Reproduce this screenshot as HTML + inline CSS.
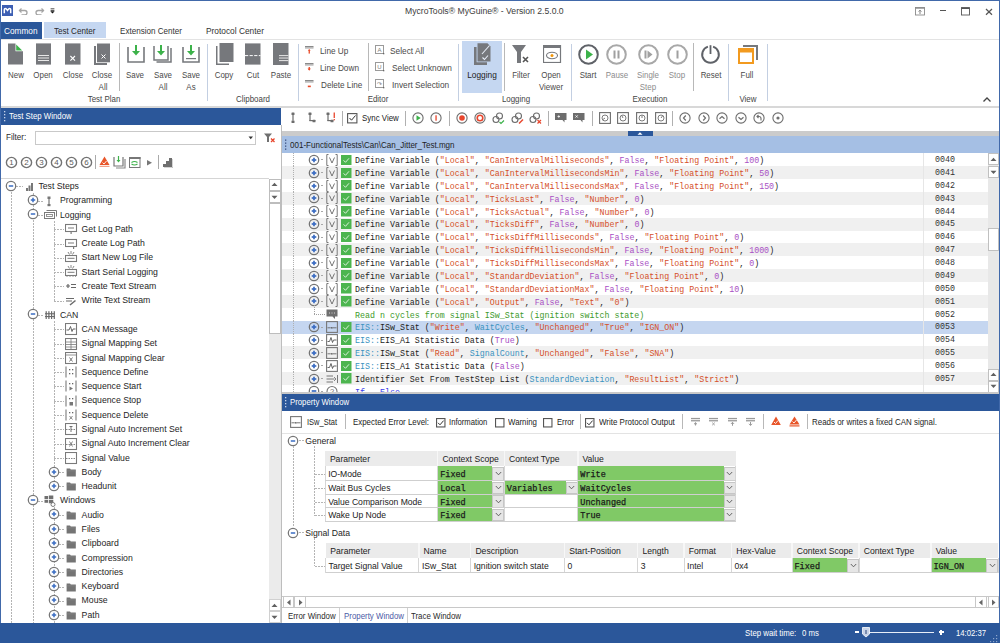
<!DOCTYPE html>
<html><head><meta charset="utf-8"><style>
html,body{margin:0;padding:0;}
body{width:1000px;height:643px;overflow:hidden;position:relative;background:#fff;font-family:"Liberation Sans",sans-serif;}
.a{position:absolute;display:block;}
.t{position:absolute;white-space:nowrap;line-height:1;}
</style></head><body>
<div class="a" style="left:0px;top:0px;width:1000px;height:1px;background:#4169aa;"></div>
<div class="a" style="left:0px;top:0px;width:1px;height:643px;background:#4169aa;"></div>
<div class="a" style="left:999px;top:0px;width:1px;height:643px;background:#4169aa;"></div>
<div class="a" style="left:2.2px;top:5.2px;width:11px;height:10.8px;background:#3d5fb3;"></div>
<svg class="a" style="left:2.2px;top:5.2px;" width="11" height="10.8" viewBox="0 0 11 10.8"><path d="M2.3 8.2V4.6Q2.3 3.4 3.4 3.4Q4.2 3.4 5.5 5.3Q6.8 3.4 7.6 3.4Q8.7 3.4 8.7 4.6V8.2" fill="none" stroke="#fff" stroke-width="1.5"/></svg>
<svg class="a" style="left:18px;top:6px;" width="11" height="9" viewBox="0 0 11 9"><path d="M3.5 2.5L1.5 4.5L3.5 6.5" fill="none" stroke="#a4a4a4" stroke-width="1.3"/><path d="M1.5 4.5H6.8A2.2 2.2 0 0 1 6.8 8.9H3.5" fill="none" stroke="#a4a4a4" stroke-width="1.3"/></svg>
<svg class="a" style="left:34px;top:6px;" width="11" height="9" viewBox="0 0 11 9"><path d="M7.5 2.5L9.5 4.5L7.5 6.5" fill="none" stroke="#a4a4a4" stroke-width="1.3"/><path d="M9.5 4.5H4.2A2.2 2.2 0 0 0 4.2 8.9H7.5" fill="none" stroke="#a4a4a4" stroke-width="1.3"/></svg>
<svg class="a" style="left:50px;top:7.5px;" width="5" height="6" viewBox="0 0 5 6"><rect x="0.6" y="0.4" width="3.8" height="0.9" fill="#333"/><rect x="0.6" y="2" width="3.8" height="0.8" fill="#333"/><path d="M0.3 3.2H4.7L2.5 5.6Z" fill="#111"/></svg>
<div class="t" style="left:405.2px;top:7.64px;font-size:8.28px;color:#3c3c3c;transform:scaleX(1.045);transform-origin:left center;">MycroTools® MyGuine® - Version 2.5.0.0</div>
<svg class="a" style="left:914.5px;top:6.5px;" width="11" height="9" viewBox="0 0 11 9"><rect x="0.5" y="0.5" width="9" height="7.5" fill="none" stroke="#8a8a8a" stroke-width="0.9"/><rect x="0.5" y="0.5" width="9" height="1.2" fill="#8a8a8a"/><path d="M5 7V3.2M3.6 4.6L5 3.2L6.4 4.6" fill="none" stroke="#666" stroke-width="0.8"/></svg>
<div class="a" style="left:940px;top:10px;width:5.5px;height:1.1px;background:#555;"></div>
<svg class="a" style="left:960.5px;top:6.5px;" width="10" height="9" viewBox="0 0 10 9"><rect x="0.5" y="0.6" width="8" height="7.4" fill="none" stroke="#555" stroke-width="0.9"/><rect x="0.5" y="0.6" width="8" height="1.4" fill="#555"/></svg>
<svg class="a" style="left:984.5px;top:7.5px;" width="9" height="8" viewBox="0 0 9 8"><path d="M1 1L7 6.8M7 1L1 6.8" stroke="#555" stroke-width="1.2"/></svg>
<div class="a" style="left:1px;top:22px;width:41px;height:16.5px;background:#2b579a;"></div>
<div class="t" style="left:4.3px;top:25.61px;font-size:9.74px;color:#fff;transform:scaleX(0.848);transform-origin:left center;">Common</div>
<div class="a" style="left:44px;top:22.2px;width:62px;height:16.3px;background:#c5d7f1;"></div>
<div class="t" style="left:54.1px;top:25.61px;font-size:9.74px;color:#2a2a2a;transform:scaleX(0.831);transform-origin:left center;">Test Center</div>
<div class="t" style="left:119.9px;top:25.61px;font-size:9.74px;color:#333;transform:scaleX(0.830);transform-origin:left center;">Extension Center</div>
<div class="t" style="left:205.8px;top:25.61px;font-size:9.74px;color:#333;transform:scaleX(0.857);transform-origin:left center;">Protocol Center</div>
<div class="a" style="left:1px;top:38.5px;width:998px;height:1px;background:#e3e3e3;"></div>
<div class="a" style="left:1px;top:106px;width:998px;height:2px;background:#d8d8d8;"></div>
<div class="a" style="left:119px;top:43px;width:1px;height:48px;background:#b8b8b8;"></div>
<div class="a" style="left:368px;top:43px;width:1px;height:48px;background:#b8b8b8;"></div>
<div class="a" style="left:504px;top:43px;width:1px;height:48px;background:#b8b8b8;"></div>
<div class="a" style="left:693px;top:43px;width:1px;height:48px;background:#b8b8b8;"></div>
<div class="a" style="left:207px;top:44px;width:1px;height:57px;background:#c3cfe2;"></div>
<div class="a" style="left:298px;top:44px;width:1px;height:57px;background:#c3cfe2;"></div>
<div class="a" style="left:458px;top:44px;width:1px;height:57px;background:#c3cfe2;"></div>
<div class="a" style="left:571px;top:44px;width:1px;height:57px;background:#c3cfe2;"></div>
<div class="a" style="left:728px;top:44px;width:1px;height:57px;background:#c3cfe2;"></div>
<div class="a" style="left:767px;top:44px;width:1px;height:57px;background:#c3cfe2;"></div>
<svg class="a" style="left:8px;top:43px;" width="16" height="22" viewBox="0 0 16 22"><path d="M0 0.4H7.5V8.2H15V21.6H0Z" fill="#76787c"/><path d="M8.2 1.6V7.4H14.2Z" fill="#3cb24a"/></svg>
<div class="t" style="left:-284.4px;width:600px;text-align:center;top:70.45px;font-size:9.45px;color:#4a4a4a;transform:scaleX(0.840);transform-origin:center center;">New</div>
<svg class="a" style="left:36px;top:43px;" width="16" height="22" viewBox="0 0 16 22"><rect y="0.4" width="15" height="21.2" fill="#76787c"/><rect x="2" y="12" width="11" height="1" fill="#e8e8e8"/><rect x="2" y="14.5" width="11" height="1" fill="#e8e8e8"/><rect x="2" y="17" width="11" height="1" fill="#e8e8e8"/></svg>
<div class="t" style="left:-257.1px;width:600px;text-align:center;top:70.45px;font-size:9.45px;color:#4a4a4a;transform:scaleX(0.840);transform-origin:center center;">Open</div>
<svg class="a" style="left:65px;top:43px;" width="16" height="22" viewBox="0 0 16 22"><rect y="0.4" width="15.5" height="21.2" fill="#76787c"/><path d="M5.4 13L10 17.6M10 13L5.4 17.6" stroke="#fff" stroke-width="1.1"/></svg>
<div class="t" style="left:-227.2px;width:600px;text-align:center;top:70.45px;font-size:9.45px;color:#4a4a4a;transform:scaleX(0.840);transform-origin:center center;">Close</div>
<svg class="a" style="left:94px;top:43px;" width="17" height="23" viewBox="0 0 17 23"><path d="M0 3H2V20H13V22H0Z" fill="#76787c"/><rect x="3" y="0.5" width="13" height="18.8" fill="#76787c"/><path d="M7.5 11.5L11.5 15.5M11.5 11.5L7.5 15.5" stroke="#fff" stroke-width="1"/></svg>
<div class="t" style="left:-198px;width:600px;text-align:center;top:70.45px;font-size:9.45px;color:#4a4a4a;transform:scaleX(0.840);transform-origin:center center;">Close</div>
<div class="t" style="left:-197px;width:600px;text-align:center;top:81.55px;font-size:9.45px;color:#4a4a4a;transform:scaleX(0.840);transform-origin:center center;">All</div>
<svg class="a" style="left:126.5px;top:45px;" width="20" height="19" viewBox="0 0 20 19"><path d="M1 2V17H17V2" fill="none" stroke="#76787c" stroke-width="1.6"/><path d="M9 0V8" stroke="#3cb24a" stroke-width="2"/><path d="M5 6L9 10.5L13 6Z" fill="#3cb24a"/></svg>
<div class="t" style="left:-164.7px;width:600px;text-align:center;top:70.45px;font-size:9.45px;color:#4a4a4a;transform:scaleX(0.840);transform-origin:center center;">Save</div>
<svg class="a" style="left:153px;top:45px;" width="20" height="19" viewBox="0 0 20 19"><path d="M1 1V15H15V1" fill="none" stroke="#76787c" stroke-width="1.5"/><path d="M3.5 17H18V3" fill="none" stroke="#76787c" stroke-width="1.5"/><path d="M8 0V8" stroke="#3cb24a" stroke-width="2"/><path d="M4 6L8 10.5L12 6Z" fill="#3cb24a"/></svg>
<div class="t" style="left:-137.2px;width:600px;text-align:center;top:70.45px;font-size:9.45px;color:#4a4a4a;transform:scaleX(0.840);transform-origin:center center;">Save</div>
<div class="t" style="left:-137.2px;width:600px;text-align:center;top:81.55px;font-size:9.45px;color:#4a4a4a;transform:scaleX(0.840);transform-origin:center center;">All</div>
<svg class="a" style="left:181.5px;top:45px;" width="20" height="19" viewBox="0 0 20 19"><path d="M1 2V17H17V2" fill="none" stroke="#76787c" stroke-width="1.6"/><rect x="4" y="13" width="10" height="1.2" fill="#76787c"/><path d="M9 0V8" stroke="#3cb24a" stroke-width="2"/><path d="M5 6L9 10.5L13 6Z" fill="#3cb24a"/></svg>
<div class="t" style="left:-109.4px;width:600px;text-align:center;top:70.45px;font-size:9.45px;color:#4a4a4a;transform:scaleX(0.840);transform-origin:center center;">Save</div>
<div class="t" style="left:-109.4px;width:600px;text-align:center;top:81.55px;font-size:9.45px;color:#4a4a4a;transform:scaleX(0.840);transform-origin:center center;">As</div>
<svg class="a" style="left:216px;top:43px;" width="18" height="22" viewBox="0 0 18 22"><rect x="0" y="3" width="13" height="19" fill="#76787c"/><rect x="1.5" y="3" width="11.5" height="17.5" fill="#fff"/><rect x="3.5" y="0" width="14" height="19" fill="#76787c"/></svg>
<div class="t" style="left:-75.6px;width:600px;text-align:center;top:70.45px;font-size:9.45px;color:#4a4a4a;transform:scaleX(0.840);transform-origin:center center;">Copy</div>
<svg class="a" style="left:245px;top:43px;" width="16" height="22" viewBox="0 0 16 22"><rect y="0.4" width="15.5" height="21.2" fill="#76787c"/><path d="M0 12.6H15.5" stroke="#fff" stroke-width="1" stroke-dasharray="3.2 1.4"/></svg>
<div class="t" style="left:-47.19999999999999px;width:600px;text-align:center;top:70.45px;font-size:9.45px;color:#4a4a4a;transform:scaleX(0.840);transform-origin:center center;">Cut</div>
<svg class="a" style="left:273px;top:43px;" width="16" height="22" viewBox="0 0 16 22"><rect width="15.5" height="22" fill="#76787c"/><rect x="6" y="12" width="9.5" height="1.1" fill="#ddd"/><rect x="6" y="14.5" width="9.5" height="1.1" fill="#ddd"/><rect x="6" y="17" width="9.5" height="1.1" fill="#ddd"/></svg>
<div class="t" style="left:-19.30000000000001px;width:600px;text-align:center;top:70.45px;font-size:9.45px;color:#4a4a4a;transform:scaleX(0.840);transform-origin:center center;">Paste</div>
<div class="t" style="left:-196px;width:600px;text-align:center;top:94.05px;font-size:9.45px;color:#444;transform:scaleX(0.840);transform-origin:center center;">Test Plan</div>
<div class="t" style="left:-47px;width:600px;text-align:center;top:94.05px;font-size:9.45px;color:#444;transform:scaleX(0.840);transform-origin:center center;">Clipboard</div>
<svg class="a" style="left:305px;top:46px;" width="10" height="9" viewBox="0 0 10 9"><rect x="0" y="0" width="8.5" height="1.4" fill="#8a8a8a"/><rect x="0" y="1.4" width="8.5" height="1.2" fill="#b0b0b0"/><rect x="3.6" y="3.6" width="1.3" height="4" fill="#e84c2a"/><path d="M2.8 4.8L4.25 3.2L5.7 4.8Z" fill="#e84c2a"/></svg>
<div class="t" style="left:320.2px;top:46.90px;font-size:9.16px;color:#4a4a4a;transform:scaleX(0.897);transform-origin:left center;">Line Up</div>
<svg class="a" style="left:305px;top:63px;" width="10" height="9" viewBox="0 0 10 9"><rect x="0" y="0" width="8.5" height="1.4" fill="#8a8a8a"/><rect x="0" y="1.4" width="8.5" height="1.2" fill="#b0b0b0"/><rect x="3.6" y="4" width="1.3" height="3" fill="#e84c2a"/><path d="M2.6 5.5L4.25 7.8L5.9 5.5Z" fill="#e84c2a"/></svg>
<div class="t" style="left:320.2px;top:64.00px;font-size:9.16px;color:#4a4a4a;transform:scaleX(0.901);transform-origin:left center;">Line Down</div>
<svg class="a" style="left:305px;top:80px;" width="10" height="9" viewBox="0 0 10 9"><rect x="0" y="0" width="8.5" height="1.4" fill="#8a8a8a"/><rect x="0" y="1.4" width="8.5" height="1.2" fill="#b0b0b0"/><rect x="2.8" y="5.6" width="3" height="1.6" fill="#e84c2a"/></svg>
<div class="t" style="left:320.7px;top:81.10px;font-size:9.16px;color:#4a4a4a;transform:scaleX(0.891);transform-origin:left center;">Delete Line</div>
<svg class="a" style="left:375px;top:45px;" width="11" height="11" viewBox="0 0 11 11"><rect x="0.5" y="0.5" width="8" height="8" fill="none" stroke="#9a9a9a"/><text x="4.5" y="6.8" font-size="6" text-anchor="middle" fill="#7a7a7a" font-family="Liberation Sans">A</text><rect x="8" y="8" width="1.3" height="1.3" fill="#666"/></svg>
<div class="t" style="left:390.4px;top:46.90px;font-size:9.16px;color:#4a4a4a;transform:scaleX(0.908);transform-origin:left center;">Select All</div>
<svg class="a" style="left:375px;top:62px;" width="11" height="11" viewBox="0 0 11 11"><rect x="0.5" y="0.5" width="8" height="8" fill="none" stroke="#9a9a9a"/><text x="4.5" y="6.8" font-size="6" text-anchor="middle" fill="#7a7a7a" font-family="Liberation Sans">U</text><rect x="8" y="8" width="1.3" height="1.3" fill="#666"/></svg>
<div class="t" style="left:391.7px;top:64.00px;font-size:9.16px;color:#4a4a4a;transform:scaleX(0.905);transform-origin:left center;">Select Unknown</div>
<svg class="a" style="left:375px;top:79px;" width="11" height="11" viewBox="0 0 11 11"><rect x="0.5" y="0.5" width="8" height="8" fill="none" stroke="#9a9a9a"/><text x="4.5" y="6.8" font-size="6" text-anchor="middle" fill="#7a7a7a" font-family="Liberation Sans">&#8631;</text><rect x="8" y="8" width="1.3" height="1.3" fill="#666"/></svg>
<div class="t" style="left:391.7px;top:81.10px;font-size:9.16px;color:#4a4a4a;transform:scaleX(0.906);transform-origin:left center;">Invert Selection</div>
<div class="t" style="left:78px;width:600px;text-align:center;top:94.05px;font-size:9.45px;color:#444;transform:scaleX(0.840);transform-origin:center center;">Editor</div>
<div class="a" style="left:462px;top:40.5px;width:40px;height:52px;background:#c5d7f1;"></div>
<svg class="a" style="left:474px;top:43px;" width="18" height="23" viewBox="0 0 18 23"><path d="M0 4H2.6V19.3H13V22H0Z" fill="#76787c"/><path d="M3.5 0.2H13.5L16.5 3.5V18.5H3.5Z" fill="#76787c"/><path d="M15.5 2.5L8 11" stroke="#e8eef8" stroke-width="1.1"/><path d="M8.5 14.5L10.5 16.5L14 12.5" fill="none" stroke="#e8eef8" stroke-width="1.1"/></svg>
<div class="t" style="left:182px;width:600px;text-align:center;top:70.45px;font-size:9.45px;color:#222;transform:scaleX(0.880);transform-origin:center center;">Logging</div>
<svg class="a" style="left:512px;top:45px;" width="19" height="19" viewBox="0 0 19 19"><path d="M0 0H14L9 7V18H5V7Z" fill="#76787c"/><path d="M11 12L16 17M16 12L11 17" stroke="#555" stroke-width="1.6"/></svg>
<div class="t" style="left:221.20000000000005px;width:600px;text-align:center;top:70.45px;font-size:9.45px;color:#4a4a4a;transform:scaleX(0.840);transform-origin:center center;">Filter</div>
<svg class="a" style="left:543px;top:45px;" width="19" height="18" viewBox="0 0 19 18"><rect x="0.5" y="0.5" width="17" height="17" fill="none" stroke="#76787c" stroke-width="1.2"/><rect x="0" y="0" width="18" height="3" fill="#76787c"/><ellipse cx="9" cy="10.5" rx="5.5" ry="3.2" fill="none" stroke="#76787c" stroke-width="1.1"/><circle cx="9" cy="10.5" r="1.5" fill="#f0960a"/></svg>
<div class="t" style="left:251.29999999999995px;width:600px;text-align:center;top:70.45px;font-size:9.45px;color:#4a4a4a;transform:scaleX(0.840);transform-origin:center center;">Open</div>
<div class="t" style="left:251.29999999999995px;width:600px;text-align:center;top:81.55px;font-size:9.45px;color:#4a4a4a;transform:scaleX(0.840);transform-origin:center center;">Viewer</div>
<div class="t" style="left:215.5px;width:600px;text-align:center;top:94.05px;font-size:9.45px;color:#444;transform:scaleX(0.840);transform-origin:center center;">Logging</div>
<svg class="a" style="left:577.5px;top:44px;" width="21" height="21" viewBox="0 0 21 21"><circle cx="10.5" cy="10.5" r="9.3" fill="none" stroke="#5f6268" stroke-width="2"/><path d="M8 5.5L15 10.5L8 15.5Z" fill="#3cb24a"/></svg>
<div class="t" style="left:287.79999999999995px;width:600px;text-align:center;top:70.45px;font-size:9.45px;color:#4a4a4a;transform:scaleX(0.840);transform-origin:center center;">Start</div>
<svg class="a" style="left:605.5px;top:44px;" width="21" height="21" viewBox="0 0 21 21"><circle cx="10.5" cy="10.5" r="9.3" fill="none" stroke="#a8a8a8" stroke-width="2"/><rect x="7.5" y="6.5" width="2" height="8" fill="#a0a0a0"/><rect x="11.5" y="6.5" width="2" height="8" fill="#a0a0a0"/></svg>
<div class="t" style="left:316.6px;width:600px;text-align:center;top:70.45px;font-size:9.45px;color:#8c8c8c;transform:scaleX(0.840);transform-origin:center center;">Pause</div>
<svg class="a" style="left:637.5px;top:44px;" width="21" height="21" viewBox="0 0 21 21"><circle cx="10.5" cy="10.5" r="9.3" fill="none" stroke="#a8a8a8" stroke-width="2"/><rect x="6.5" y="6.5" width="2" height="8" fill="#a0a0a0"/><path d="M9.5 6.5L14.5 10.5L9.5 14.5Z" fill="#a0a0a0"/></svg>
<div class="t" style="left:347.70000000000005px;width:600px;text-align:center;top:70.45px;font-size:9.45px;color:#8c8c8c;transform:scaleX(0.840);transform-origin:center center;">Single</div>
<div class="t" style="left:347.70000000000005px;width:600px;text-align:center;top:81.55px;font-size:9.45px;color:#8c8c8c;transform:scaleX(0.840);transform-origin:center center;">Step</div>
<svg class="a" style="left:666.5px;top:44px;" width="21" height="21" viewBox="0 0 21 21"><circle cx="10.5" cy="10.5" r="9.3" fill="none" stroke="#a8a8a8" stroke-width="2"/><rect x="9.5" y="6.5" width="2" height="8" fill="#a0a0a0"/></svg>
<div class="t" style="left:377px;width:600px;text-align:center;top:70.45px;font-size:9.45px;color:#8c8c8c;transform:scaleX(0.840);transform-origin:center center;">Stop</div>
<svg class="a" style="left:699.5px;top:44px;" width="21" height="21" viewBox="0 0 21 21"><path d="M7.9 2.6A8.3 8.3 0 1 0 13.1 2.6" fill="none" stroke="#5f6268" stroke-width="2"/><path d="M10.5 1.2V10" stroke="#5f6268" stroke-width="1.8"/></svg>
<div class="t" style="left:410.70000000000005px;width:600px;text-align:center;top:70.45px;font-size:9.45px;color:#4a4a4a;transform:scaleX(0.840);transform-origin:center center;">Reset</div>
<div class="t" style="left:350.4px;width:600px;text-align:center;top:94.05px;font-size:9.45px;color:#444;transform:scaleX(0.840);transform-origin:center center;">Execution</div>
<svg class="a" style="left:738px;top:45px;" width="21" height="20" viewBox="0 0 21 20"><path d="M5 1H19V15" fill="none" stroke="#76787c" stroke-width="2"/><rect x="1" y="4" width="14" height="14" fill="#fff" stroke="#f29a1f" stroke-width="2"/><rect x="1" y="4" width="14" height="3.5" fill="#f29a1f"/></svg>
<div class="t" style="left:447.20000000000005px;width:600px;text-align:center;top:70.45px;font-size:9.45px;color:#4a4a4a;transform:scaleX(0.840);transform-origin:center center;">Full</div>
<div class="t" style="left:448px;width:600px;text-align:center;top:94.05px;font-size:9.45px;color:#444;transform:scaleX(0.840);transform-origin:center center;">View</div>
<svg class="a" style="left:982px;top:96px;" width="10" height="7" viewBox="0 0 10 7"><path d="M1.5 5.5L5 2L8.5 5.5" fill="none" stroke="#444" stroke-width="1.3"/></svg>
<div class="a" style="left:1px;top:108px;width:280px;height:16.5px;background:#2b579a;"></div>
<svg class="a" style="left:3px;top:110px;" width="4" height="13" viewBox="0 0 4 13"><rect x="1" y="1" width="1.3" height="1.3" fill="#c8d4ea"/><rect x="1" y="4" width="1.3" height="1.3" fill="#c8d4ea"/><rect x="1" y="7" width="1.3" height="1.3" fill="#c8d4ea"/><rect x="1" y="10" width="1.3" height="1.3" fill="#c8d4ea"/></svg>
<div class="t" style="left:9.2px;top:112.91px;font-size:8.14px;color:#fff;transform:scaleX(0.964);transform-origin:left center;">Test Step Window</div>
<div class="t" style="left:6px;top:133.43px;font-size:9.30px;color:#2a2a2a;transform:scaleX(0.869);transform-origin:left center;">Filter:</div>
<div class="a" style="left:35px;top:131px;width:221px;height:13.5px;background:#fff;box-sizing:border-box;border:1px solid #c9c9c9;"></div>
<svg class="a" style="left:248px;top:136px;" width="6" height="4" viewBox="0 0 6 4"><path d="M0.5 0.5H5L2.75 3.2Z" fill="#333"/></svg>
<svg class="a" style="left:264px;top:133px;" width="12" height="10" viewBox="0 0 12 10"><path d="M0 0.5H8L5 4V9H3V4Z" fill="#707070"/><path d="M7 5.5L10.5 9M10.5 5.5L7 9" stroke="#e8452c" stroke-width="1.3"/></svg>
<svg class="a" style="left:4.699999999999999px;top:156px;" width="13" height="13" viewBox="0 0 13 13"><circle cx="6.5" cy="6.5" r="5.1" fill="none" stroke="#737373" stroke-width="1.4"/><text x="6.5" y="9.4" font-size="8" text-anchor="middle" fill="#5a5a5a" font-family="Liberation Sans">1</text></svg>
<svg class="a" style="left:19.7px;top:156px;" width="13" height="13" viewBox="0 0 13 13"><circle cx="6.5" cy="6.5" r="5.1" fill="none" stroke="#737373" stroke-width="1.4"/><text x="6.5" y="9.4" font-size="8" text-anchor="middle" fill="#5a5a5a" font-family="Liberation Sans">2</text></svg>
<svg class="a" style="left:34.7px;top:156px;" width="13" height="13" viewBox="0 0 13 13"><circle cx="6.5" cy="6.5" r="5.1" fill="none" stroke="#737373" stroke-width="1.4"/><text x="6.5" y="9.4" font-size="8" text-anchor="middle" fill="#5a5a5a" font-family="Liberation Sans">3</text></svg>
<svg class="a" style="left:49.7px;top:156px;" width="13" height="13" viewBox="0 0 13 13"><circle cx="6.5" cy="6.5" r="5.1" fill="none" stroke="#737373" stroke-width="1.4"/><text x="6.5" y="9.4" font-size="8" text-anchor="middle" fill="#5a5a5a" font-family="Liberation Sans">4</text></svg>
<svg class="a" style="left:64.7px;top:156px;" width="13" height="13" viewBox="0 0 13 13"><circle cx="6.5" cy="6.5" r="5.1" fill="none" stroke="#737373" stroke-width="1.4"/><text x="6.5" y="9.4" font-size="8" text-anchor="middle" fill="#5a5a5a" font-family="Liberation Sans">5</text></svg>
<svg class="a" style="left:79.7px;top:156px;" width="13" height="13" viewBox="0 0 13 13"><circle cx="6.5" cy="6.5" r="5.1" fill="none" stroke="#737373" stroke-width="1.4"/><text x="6.5" y="9.4" font-size="8" text-anchor="middle" fill="#5a5a5a" font-family="Liberation Sans">6</text></svg>
<div class="a" style="left:95px;top:155px;width:1px;height:14px;background:#aaa;"></div>
<svg class="a" style="left:99px;top:156px;" width="11" height="12" viewBox="0 0 11 12"><path d="M5.5 0.5L10.5 9H0.5Z" fill="#e8562a"/><rect x="0.5" y="9.8" width="10" height="1.2" fill="#f0a088"/><path d="M3.5 6.5L5 8L7.5 5" fill="none" stroke="#fff" stroke-width="0.9"/></svg>
<svg class="a" style="left:113px;top:156px;" width="13" height="13" viewBox="0 0 13 13"><path d="M1 1V10H10V1" fill="none" stroke="#777" stroke-width="1.2"/><path d="M3 12H12V3" fill="none" stroke="#888" stroke-width="1.2"/><path d="M5.5 0V5" stroke="#3cb24a" stroke-width="1.2"/><path d="M3.5 4L5.5 6.5L7.5 4Z" fill="#3cb24a"/></svg>
<svg class="a" style="left:129px;top:157px;" width="12" height="11" viewBox="0 0 12 11"><rect x="0.5" y="0.5" width="10.5" height="10" fill="none" stroke="#777" stroke-width="1"/><rect x="0" y="0" width="11.5" height="2" fill="#777"/><path d="M2.5 5.5Q5.5 3.5 8.5 5.5M8.5 7Q5.5 9 2.5 7" fill="none" stroke="#3cb24a" stroke-width="1.2"/></svg>
<svg class="a" style="left:147px;top:160px;" width="6" height="6" viewBox="0 0 6 6"><path d="M0 0L5 2.75L0 5.5Z" fill="#777"/></svg>
<div class="a" style="left:158px;top:155px;width:1px;height:14px;background:#aaa;"></div>
<svg class="a" style="left:162px;top:157px;" width="11" height="11" viewBox="0 0 11 11"><path d="M1 10V7H4V4H7V1H10V10Z" fill="#6f6f6f"/><path d="M2 11H11V2" fill="none" stroke="#aaa" stroke-width="1"/></svg>
<div class="a" style="left:1px;top:178px;width:268px;height:1px;background:#d5d5d5;"></div>
<div class="a" style="left:268.5px;top:178.5px;width:12px;height:445px;background:#ebebeb;"></div>
<div class="a" style="left:268.5px;top:178.5px;width:12px;height:12px;background:#fff;box-sizing:border-box;border:1px solid #bdbdbd;"></div>
<div class="a" style="left:268.5px;top:190.8px;width:12px;height:12px;background:#fff;box-sizing:border-box;border:1px solid #bdbdbd;"></div>
<svg class="a" style="left:271px;top:182px;" width="7" height="5" viewBox="0 0 7 5"><path d="M0.5 4L3.5 0.8L6.5 4Z" fill="#606060"/></svg>
<svg class="a" style="left:271px;top:195px;" width="7" height="5" viewBox="0 0 7 5"><path d="M0.5 0.8L3.5 4L6.5 0.8Z" fill="#606060"/></svg>
<div class="a" style="left:268.5px;top:203px;width:12px;height:131px;background:#fff;box-sizing:border-box;border:1px solid #bdbdbd;"></div>
<div class="a" style="left:268.5px;top:598.8px;width:12px;height:12px;background:#fff;box-sizing:border-box;border:1px solid #d0d0d0;"></div>
<div class="a" style="left:268.5px;top:611px;width:12px;height:12px;background:#fff;box-sizing:border-box;border:1px solid #d0d0d0;"></div>
<svg class="a" style="left:271px;top:602.5px;" width="7" height="5" viewBox="0 0 7 5"><path d="M0.5 4L3.5 0.8L6.5 4Z" fill="#606060"/></svg>
<svg class="a" style="left:271px;top:614.5px;" width="7" height="5" viewBox="0 0 7 5"><path d="M0.5 0.8L3.5 4L6.5 0.8Z" fill="#606060"/></svg>
<div class="a" style="left:281px;top:124.5px;width:1px;height:498.5px;background:#bdbdbd;"></div>
<div class="a" style="left:11px;top:192px;width:1px;height:431px;background:transparent;background-image:linear-gradient(#b4b4b4 60%,transparent 60%);background-size:1px 3px;"></div>
<div class="a" style="left:33px;top:193px;width:1px;height:430px;background:transparent;background-image:linear-gradient(#b4b4b4 60%,transparent 60%);background-size:1px 3px;"></div>
<div class="a" style="left:54px;top:220.98000000000002px;width:1px;height:80.74000000000001px;background:transparent;background-image:linear-gradient(#b4b4b4 60%,transparent 60%);background-size:1px 3px;"></div>
<div class="a" style="left:54px;top:321.01px;width:1px;height:166.48000000000002px;background:transparent;background-image:linear-gradient(#b4b4b4 60%,transparent 60%);background-size:1px 3px;"></div>
<div class="a" style="left:54px;top:506.78px;width:1px;height:116.22000000000003px;background:transparent;background-image:linear-gradient(#b4b4b4 60%,transparent 60%);background-size:1px 3px;"></div>
<div class="a" style="left:16.2px;top:186px;width:7.300000000000001px;height:1px;background:transparent;background-image:linear-gradient(90deg,#b4b4b4 60%,transparent 60%);background-size:3px 1px;"></div>
<svg class="a" style="left:5.199999999999999px;top:179.8px;" width="12" height="12" viewBox="0 0 12 12"><circle cx="6" cy="6" r="4.7" fill="#fff" stroke="#767676" stroke-width="1.25"/><path d="M3.8 6H8.2" stroke="#3a6cc2" stroke-width="1.5"/></svg>
<svg class="a" style="left:24.5px;top:180.4px;" width="12" height="12" viewBox="0 0 12 12"><rect x="1" y="8" width="2" height="3" fill="#777"/><rect x="3.5" y="5.5" width="2" height="5.5" fill="#777"/><rect x="6" y="3" width="2" height="8" fill="#777"/></svg>
<div class="t" style="left:38.4px;top:182.03px;font-size:8.70px;color:#1e1e1e;">Test Steps</div>
<div class="a" style="left:37.8px;top:201px;width:5.200000000000003px;height:1px;background:transparent;background-image:linear-gradient(90deg,#b4b4b4 60%,transparent 60%);background-size:3px 1px;"></div>
<svg class="a" style="left:26.799999999999997px;top:194.09px;" width="12" height="12" viewBox="0 0 12 12"><circle cx="6" cy="6" r="4.7" fill="#fff" stroke="#767676" stroke-width="1.25"/><path d="M3.8 6H8.2" stroke="#3a6cc2" stroke-width="1.5"/><path d="M6 3.7V8.3" stroke="#3a6cc2" stroke-width="1.5"/></svg>
<svg class="a" style="left:44px;top:194.69px;" width="12" height="12" viewBox="0 0 12 12"><rect x="3.5" y="1.5" width="3" height="2.5" fill="#777"/><rect x="4.4" y="4" width="1.2" height="5" fill="#777"/><rect x="3.5" y="9" width="3" height="2.2" fill="#777"/></svg>
<div class="t" style="left:60px;top:196.32px;font-size:8.70px;color:#1e1e1e;">Programming</div>
<div class="a" style="left:37.8px;top:215px;width:5.200000000000003px;height:1px;background:transparent;background-image:linear-gradient(90deg,#b4b4b4 60%,transparent 60%);background-size:3px 1px;"></div>
<svg class="a" style="left:26.799999999999997px;top:208.38000000000002px;" width="12" height="12" viewBox="0 0 12 12"><circle cx="6" cy="6" r="4.7" fill="#fff" stroke="#767676" stroke-width="1.25"/><path d="M3.8 6H8.2" stroke="#3a6cc2" stroke-width="1.5"/></svg>
<svg class="a" style="left:44px;top:208.98000000000002px;" width="14" height="12" viewBox="0 0 14 12"><rect x="0.5" y="3.5" width="10" height="6" fill="none" stroke="#7a7a7a"/><rect x="2.5" y="5.5" width="6" height="2" fill="none" stroke="#7a7a7a" stroke-width="0.8"/><path d="M2.5 1.5H12.5V7.5" fill="none" stroke="#7a7a7a"/></svg>
<div class="t" style="left:60px;top:210.61px;font-size:8.70px;color:#1e1e1e;">Logging</div>
<div class="a" style="left:54.3px;top:229px;width:9.700000000000003px;height:1px;background:transparent;background-image:linear-gradient(90deg,#b4b4b4 60%,transparent 60%);background-size:3px 1px;"></div>
<svg class="a" style="left:65px;top:223.27px;" width="13" height="12" viewBox="0 0 13 12"><rect x="0.5" y="1.5" width="11" height="7" fill="none" stroke="#7a7a7a" stroke-width="1.1"/><rect x="3" y="4.5" width="6" height="1" fill="#7a7a7a"/><rect x="5.5" y="9" width="1.2" height="2" fill="#7a7a7a"/></svg>
<div class="t" style="left:81.6px;top:224.90px;font-size:8.70px;color:#1e1e1e;">Get Log Path</div>
<div class="a" style="left:54.3px;top:244px;width:9.700000000000003px;height:1px;background:transparent;background-image:linear-gradient(90deg,#b4b4b4 60%,transparent 60%);background-size:3px 1px;"></div>
<svg class="a" style="left:65px;top:237.56px;" width="13" height="12" viewBox="0 0 13 12"><rect x="0.5" y="1.5" width="11" height="7" fill="none" stroke="#7a7a7a" stroke-width="1.1"/><rect x="3" y="4.5" width="6" height="1" fill="#7a7a7a"/><rect x="8" y="9" width="1.2" height="2" fill="#7a7a7a"/></svg>
<div class="t" style="left:81.6px;top:239.19px;font-size:8.70px;color:#1e1e1e;">Create Log Path</div>
<div class="a" style="left:54.3px;top:258px;width:9.700000000000003px;height:1px;background:transparent;background-image:linear-gradient(90deg,#b4b4b4 60%,transparent 60%);background-size:3px 1px;"></div>
<svg class="a" style="left:65px;top:250.85000000000002px;" width="13" height="14" viewBox="0 0 13 14"><path d="M6 0V3M3 1L4.5 3.5M9 1L7.5 3.5" stroke="#7a7a7a" stroke-width="0.9"/><rect x="0.5" y="4.5" width="11" height="6" fill="none" stroke="#7a7a7a" stroke-width="1.1"/><rect x="2.5" y="6.8" width="7" height="1" fill="#7a7a7a"/></svg>
<div class="t" style="left:81.6px;top:253.48px;font-size:8.70px;color:#1e1e1e;">Start New Log File</div>
<div class="a" style="left:54.3px;top:272px;width:9.700000000000003px;height:1px;background:transparent;background-image:linear-gradient(90deg,#b4b4b4 60%,transparent 60%);background-size:3px 1px;"></div>
<svg class="a" style="left:65px;top:265.14px;" width="13" height="14" viewBox="0 0 13 14"><path d="M6 0V3M3 1L4.5 3.5M9 1L7.5 3.5" stroke="#7a7a7a" stroke-width="0.9"/><rect x="0.5" y="4.5" width="11" height="6" fill="none" stroke="#7a7a7a" stroke-width="1.1"/><rect x="2.5" y="6.8" width="7" height="1" fill="#7a7a7a"/><path d="M2 10.5V12M5 10.5V12M8 10.5V12M10.5 10.5V12" stroke="#888" stroke-width="0.8"/></svg>
<div class="t" style="left:81.6px;top:267.77px;font-size:8.70px;color:#1e1e1e;">Start Serial Logging</div>
<div class="a" style="left:54.3px;top:286px;width:9.700000000000003px;height:1px;background:transparent;background-image:linear-gradient(90deg,#b4b4b4 60%,transparent 60%);background-size:3px 1px;"></div>
<svg class="a" style="left:65px;top:280.43px;" width="13" height="12" viewBox="0 0 13 12"><path d="M1 6H5M3 4V8" stroke="#666" stroke-width="1.2"/><path d="M6 4.5H11M6 7.5H11" stroke="#666" stroke-width="1.2"/></svg>
<div class="t" style="left:81.6px;top:282.06px;font-size:8.70px;color:#1e1e1e;">Create Text Stream</div>
<div class="a" style="left:54.3px;top:301px;width:9.700000000000003px;height:1px;background:transparent;background-image:linear-gradient(90deg,#b4b4b4 60%,transparent 60%);background-size:3px 1px;"></div>
<svg class="a" style="left:65px;top:294.72px;" width="13" height="12" viewBox="0 0 13 12"><path d="M1 3.5H9M1 6H7" stroke="#6a6a6a" stroke-width="1.1"/><path d="M5 10L10.5 5.5" stroke="#6a6a6a" stroke-width="1.5"/></svg>
<div class="t" style="left:81.6px;top:296.35px;font-size:8.70px;color:#1e1e1e;">Write Text Stream</div>
<div class="a" style="left:37.8px;top:315px;width:5.200000000000003px;height:1px;background:transparent;background-image:linear-gradient(90deg,#b4b4b4 60%,transparent 60%);background-size:3px 1px;"></div>
<svg class="a" style="left:26.799999999999997px;top:308.40999999999997px;" width="12" height="12" viewBox="0 0 12 12"><circle cx="6" cy="6" r="4.7" fill="#fff" stroke="#767676" stroke-width="1.25"/><path d="M3.8 6H8.2" stroke="#3a6cc2" stroke-width="1.5"/></svg>
<svg class="a" style="left:44px;top:309.01px;" width="13" height="12" viewBox="0 0 13 12"><rect x="1.6" y="2.2" width="1.2" height="7.8" fill="#6a6a6a"/><rect x="4.300000000000001" y="2.2" width="1.2" height="7.8" fill="#6a6a6a"/><rect x="7.0" y="2.2" width="1.2" height="7.8" fill="#6a6a6a"/><rect x="9.700000000000001" y="2.2" width="1.2" height="7.8" fill="#6a6a6a"/><rect x="1" y="4.2" width="9.8" height="1.1" fill="#6a6a6a"/><rect x="1" y="7" width="9.8" height="1.1" fill="#6a6a6a"/></svg>
<div class="t" style="left:60px;top:310.64px;font-size:8.70px;color:#1e1e1e;">CAN</div>
<div class="a" style="left:54.3px;top:329px;width:9.700000000000003px;height:1px;background:transparent;background-image:linear-gradient(90deg,#b4b4b4 60%,transparent 60%);background-size:3px 1px;"></div>
<svg class="a" style="left:65px;top:323.29999999999995px;" width="13" height="13" viewBox="0 0 13 13"><rect x="0.5" y="0.5" width="11" height="11" fill="none" stroke="#7a7a7a" stroke-width="1.1"/><path d="M1.5 7H4L5.5 3.5L7 8.5L8 6H10.5" fill="none" stroke="#555" stroke-width="0.9"/></svg>
<div class="t" style="left:81.6px;top:324.93px;font-size:8.70px;color:#1e1e1e;">CAN Message</div>
<div class="a" style="left:54.3px;top:344px;width:9.700000000000003px;height:1px;background:transparent;background-image:linear-gradient(90deg,#b4b4b4 60%,transparent 60%);background-size:3px 1px;"></div>
<svg class="a" style="left:65px;top:337.59000000000003px;" width="13" height="13" viewBox="0 0 13 13"><rect x="0.5" y="0.5" width="11" height="11" fill="none" stroke="#7a7a7a" stroke-width="1.1"/><path d="M1 4H11M1 6.5H11M1 9H11M6 1V11" stroke="#7a7a7a" stroke-width="0.8"/></svg>
<div class="t" style="left:81.6px;top:339.22px;font-size:8.70px;color:#1e1e1e;">Signal Mapping Set</div>
<div class="a" style="left:54.3px;top:358px;width:9.700000000000003px;height:1px;background:transparent;background-image:linear-gradient(90deg,#b4b4b4 60%,transparent 60%);background-size:3px 1px;"></div>
<svg class="a" style="left:65px;top:351.88px;" width="13" height="13" viewBox="0 0 13 13"><rect x="0.5" y="0.5" width="11" height="11" fill="none" stroke="#7a7a7a" stroke-width="1.1"/><path d="M1 3H11" stroke="#7a7a7a" stroke-width="0.8"/><path d="M4.5 5.5L7.5 9.5M7.5 5.5L4.5 9.5" stroke="#666" stroke-width="0.9"/></svg>
<div class="t" style="left:81.6px;top:353.51px;font-size:8.70px;color:#1e1e1e;">Signal Mapping Clear</div>
<div class="a" style="left:54.3px;top:372px;width:9.700000000000003px;height:1px;background:transparent;background-image:linear-gradient(90deg,#b4b4b4 60%,transparent 60%);background-size:3px 1px;"></div>
<svg class="a" style="left:65px;top:366.16999999999996px;" width="13" height="13" viewBox="0 0 13 13"><path d="M1 0.5V11.5M11 0.5V11.5" stroke="#7a7a7a" stroke-width="1.1"/><rect x="4" y="3" width="1.3" height="1.3" fill="#666"/><rect x="7" y="3" width="1.3" height="1.3" fill="#666"/><rect x="4" y="7" width="1.3" height="1.3" fill="#666"/><rect x="7" y="7" width="1.3" height="1.3" fill="#666"/></svg>
<div class="t" style="left:81.6px;top:367.80px;font-size:8.70px;color:#1e1e1e;">Sequence Define</div>
<div class="a" style="left:54.3px;top:386px;width:9.700000000000003px;height:1px;background:transparent;background-image:linear-gradient(90deg,#b4b4b4 60%,transparent 60%);background-size:3px 1px;"></div>
<svg class="a" style="left:65px;top:380.46000000000004px;" width="13" height="13" viewBox="0 0 13 13"><path d="M1 0.5V11.5M11 0.5V11.5" stroke="#7a7a7a" stroke-width="1.1"/><rect x="4" y="3" width="1.3" height="1.3" fill="#666"/><rect x="7" y="3" width="1.3" height="1.3" fill="#666"/><path d="M4.5 6.5L8 8.5L4.5 10.5Z" fill="#777"/></svg>
<div class="t" style="left:81.6px;top:382.09px;font-size:8.70px;color:#1e1e1e;">Sequence Start</div>
<div class="a" style="left:54.3px;top:401px;width:9.700000000000003px;height:1px;background:transparent;background-image:linear-gradient(90deg,#b4b4b4 60%,transparent 60%);background-size:3px 1px;"></div>
<svg class="a" style="left:65px;top:394.75px;" width="13" height="13" viewBox="0 0 13 13"><path d="M1 0.5V11.5M11 0.5V11.5" stroke="#7a7a7a" stroke-width="1.1"/><rect x="4" y="3" width="1.3" height="1.3" fill="#666"/><rect x="7" y="3" width="1.3" height="1.3" fill="#666"/><rect x="4.5" y="7" width="3.5" height="3.5" fill="#777"/></svg>
<div class="t" style="left:81.6px;top:396.38px;font-size:8.70px;color:#1e1e1e;">Sequence Stop</div>
<div class="a" style="left:54.3px;top:415px;width:9.700000000000003px;height:1px;background:transparent;background-image:linear-gradient(90deg,#b4b4b4 60%,transparent 60%);background-size:3px 1px;"></div>
<svg class="a" style="left:65px;top:409.03999999999996px;" width="13" height="13" viewBox="0 0 13 13"><path d="M1 0.5V11.5M11 0.5V11.5" stroke="#7a7a7a" stroke-width="1.1"/><rect x="4" y="3" width="1.3" height="1.3" fill="#666"/><rect x="7" y="3" width="1.3" height="1.3" fill="#666"/><path d="M4.5 7L7.5 10.5M7.5 7L4.5 10.5" stroke="#777" stroke-width="0.9"/></svg>
<div class="t" style="left:81.6px;top:410.67px;font-size:8.70px;color:#1e1e1e;">Sequence Delete</div>
<div class="a" style="left:54.3px;top:429px;width:9.700000000000003px;height:1px;background:transparent;background-image:linear-gradient(90deg,#b4b4b4 60%,transparent 60%);background-size:3px 1px;"></div>
<svg class="a" style="left:65px;top:423.33px;" width="13" height="13" viewBox="0 0 13 13"><rect x="0.5" y="0.5" width="11" height="11" fill="none" stroke="#7a7a7a" stroke-width="1.1"/><path d="M1 6.5H11" stroke="#777" stroke-width="0.9" stroke-dasharray="1.5 1"/><path d="M6 3V9M4.5 3.5H7.5" stroke="#666" stroke-width="0.9"/></svg>
<div class="t" style="left:81.6px;top:424.96px;font-size:8.70px;color:#1e1e1e;">Signal Auto Increment Set</div>
<div class="a" style="left:54.3px;top:444px;width:9.700000000000003px;height:1px;background:transparent;background-image:linear-gradient(90deg,#b4b4b4 60%,transparent 60%);background-size:3px 1px;"></div>
<svg class="a" style="left:65px;top:437.62px;" width="13" height="13" viewBox="0 0 13 13"><rect x="0.5" y="0.5" width="11" height="11" fill="none" stroke="#7a7a7a" stroke-width="1.1"/><path d="M1 6.5H11" stroke="#777" stroke-width="0.9" stroke-dasharray="1.5 1"/><path d="M4.5 3.5L7.5 8.5M7.5 3.5L4.5 8.5" stroke="#666" stroke-width="0.8"/></svg>
<div class="t" style="left:81.6px;top:439.25px;font-size:8.70px;color:#1e1e1e;">Signal Auto Increment Clear</div>
<div class="a" style="left:54.3px;top:458px;width:9.700000000000003px;height:1px;background:transparent;background-image:linear-gradient(90deg,#b4b4b4 60%,transparent 60%);background-size:3px 1px;"></div>
<svg class="a" style="left:65px;top:451.90999999999997px;" width="13" height="13" viewBox="0 0 13 13"><rect x="0.5" y="0.5" width="11" height="11" fill="none" stroke="#7a7a7a" stroke-width="1.1"/><path d="M1 6.5H11" stroke="#777" stroke-width="0.9" stroke-dasharray="1.5 1"/></svg>
<div class="t" style="left:81.6px;top:453.54px;font-size:8.70px;color:#1e1e1e;">Signal Value</div>
<div class="a" style="left:59.3px;top:472px;width:4.700000000000003px;height:1px;background:transparent;background-image:linear-gradient(90deg,#b4b4b4 60%,transparent 60%);background-size:3px 1px;"></div>
<svg class="a" style="left:48.3px;top:465.5999999999999px;" width="12" height="12" viewBox="0 0 12 12"><circle cx="6" cy="6" r="4.7" fill="#fff" stroke="#767676" stroke-width="1.25"/><path d="M3.8 6H8.2" stroke="#3a6cc2" stroke-width="1.5"/><path d="M6 3.7V8.3" stroke="#3a6cc2" stroke-width="1.5"/></svg>
<svg class="a" style="left:65px;top:466.19999999999993px;" width="12" height="12" viewBox="0 0 12 12"><path d="M1.6 2.6H5L5.8 3.6H10.8V10.6H1.6Z" fill="#747474"/><rect x="1.6" y="4.6" width="9.2" height="0.6" fill="#8a8a8a"/></svg>
<div class="t" style="left:81.6px;top:467.83px;font-size:8.70px;color:#1e1e1e;">Body</div>
<div class="a" style="left:59.3px;top:486px;width:4.700000000000003px;height:1px;background:transparent;background-image:linear-gradient(90deg,#b4b4b4 60%,transparent 60%);background-size:3px 1px;"></div>
<svg class="a" style="left:48.3px;top:479.89px;" width="12" height="12" viewBox="0 0 12 12"><circle cx="6" cy="6" r="4.7" fill="#fff" stroke="#767676" stroke-width="1.25"/><path d="M3.8 6H8.2" stroke="#3a6cc2" stroke-width="1.5"/><path d="M6 3.7V8.3" stroke="#3a6cc2" stroke-width="1.5"/></svg>
<svg class="a" style="left:65px;top:480.49px;" width="12" height="12" viewBox="0 0 12 12"><path d="M1.6 2.6H5L5.8 3.6H10.8V10.6H1.6Z" fill="#747474"/><rect x="1.6" y="4.6" width="9.2" height="0.6" fill="#8a8a8a"/></svg>
<div class="t" style="left:81.6px;top:482.12px;font-size:8.70px;color:#1e1e1e;">Headunit</div>
<div class="a" style="left:37.8px;top:501px;width:5.200000000000003px;height:1px;background:transparent;background-image:linear-gradient(90deg,#b4b4b4 60%,transparent 60%);background-size:3px 1px;"></div>
<svg class="a" style="left:26.799999999999997px;top:494.17999999999995px;" width="12" height="12" viewBox="0 0 12 12"><circle cx="6" cy="6" r="4.7" fill="#fff" stroke="#767676" stroke-width="1.25"/><path d="M3.8 6H8.2" stroke="#3a6cc2" stroke-width="1.5"/></svg>
<svg class="a" style="left:44px;top:494.78px;" width="13" height="13" viewBox="0 0 13 13"><rect x="0.5" y="1" width="3.5" height="3" fill="#707070"/><rect x="4.8" y="0.5" width="4.5" height="3.5" fill="#707070"/><rect x="0.5" y="4.8" width="3.5" height="3" fill="#707070"/><rect x="4.8" y="4.8" width="4.5" height="3.5" fill="#707070"/><circle cx="9" cy="9.5" r="2" fill="#fff" stroke="#707070" stroke-width="0.9"/></svg>
<div class="t" style="left:60px;top:496.41px;font-size:8.70px;color:#1e1e1e;">Windows</div>
<div class="a" style="left:59.3px;top:515px;width:4.700000000000003px;height:1px;background:transparent;background-image:linear-gradient(90deg,#b4b4b4 60%,transparent 60%);background-size:3px 1px;"></div>
<svg class="a" style="left:48.3px;top:508.4699999999999px;" width="12" height="12" viewBox="0 0 12 12"><circle cx="6" cy="6" r="4.7" fill="#fff" stroke="#767676" stroke-width="1.25"/><path d="M3.8 6H8.2" stroke="#3a6cc2" stroke-width="1.5"/><path d="M6 3.7V8.3" stroke="#3a6cc2" stroke-width="1.5"/></svg>
<svg class="a" style="left:65px;top:509.06999999999994px;" width="12" height="12" viewBox="0 0 12 12"><path d="M1.6 2.6H5L5.8 3.6H10.8V10.6H1.6Z" fill="#747474"/><rect x="1.6" y="4.6" width="9.2" height="0.6" fill="#8a8a8a"/></svg>
<div class="t" style="left:81.6px;top:510.70px;font-size:8.70px;color:#1e1e1e;">Audio</div>
<div class="a" style="left:59.3px;top:529px;width:4.700000000000003px;height:1px;background:transparent;background-image:linear-gradient(90deg,#b4b4b4 60%,transparent 60%);background-size:3px 1px;"></div>
<svg class="a" style="left:48.3px;top:522.76px;" width="12" height="12" viewBox="0 0 12 12"><circle cx="6" cy="6" r="4.7" fill="#fff" stroke="#767676" stroke-width="1.25"/><path d="M3.8 6H8.2" stroke="#3a6cc2" stroke-width="1.5"/><path d="M6 3.7V8.3" stroke="#3a6cc2" stroke-width="1.5"/></svg>
<svg class="a" style="left:65px;top:523.36px;" width="12" height="12" viewBox="0 0 12 12"><path d="M1.6 2.6H5L5.8 3.6H10.8V10.6H1.6Z" fill="#747474"/><rect x="1.6" y="4.6" width="9.2" height="0.6" fill="#8a8a8a"/></svg>
<div class="t" style="left:81.6px;top:524.99px;font-size:8.70px;color:#1e1e1e;">Files</div>
<div class="a" style="left:59.3px;top:544px;width:4.700000000000003px;height:1px;background:transparent;background-image:linear-gradient(90deg,#b4b4b4 60%,transparent 60%);background-size:3px 1px;"></div>
<svg class="a" style="left:48.3px;top:537.05px;" width="12" height="12" viewBox="0 0 12 12"><circle cx="6" cy="6" r="4.7" fill="#fff" stroke="#767676" stroke-width="1.25"/><path d="M3.8 6H8.2" stroke="#3a6cc2" stroke-width="1.5"/><path d="M6 3.7V8.3" stroke="#3a6cc2" stroke-width="1.5"/></svg>
<svg class="a" style="left:65px;top:537.65px;" width="12" height="12" viewBox="0 0 12 12"><path d="M1.6 2.6H5L5.8 3.6H10.8V10.6H1.6Z" fill="#747474"/><rect x="1.6" y="4.6" width="9.2" height="0.6" fill="#8a8a8a"/></svg>
<div class="t" style="left:81.6px;top:539.28px;font-size:8.70px;color:#1e1e1e;">Clipboard</div>
<div class="a" style="left:59.3px;top:558px;width:4.700000000000003px;height:1px;background:transparent;background-image:linear-gradient(90deg,#b4b4b4 60%,transparent 60%);background-size:3px 1px;"></div>
<svg class="a" style="left:48.3px;top:551.3399999999999px;" width="12" height="12" viewBox="0 0 12 12"><circle cx="6" cy="6" r="4.7" fill="#fff" stroke="#767676" stroke-width="1.25"/><path d="M3.8 6H8.2" stroke="#3a6cc2" stroke-width="1.5"/><path d="M6 3.7V8.3" stroke="#3a6cc2" stroke-width="1.5"/></svg>
<svg class="a" style="left:65px;top:551.9399999999999px;" width="12" height="12" viewBox="0 0 12 12"><path d="M1.6 2.6H5L5.8 3.6H10.8V10.6H1.6Z" fill="#747474"/><rect x="1.6" y="4.6" width="9.2" height="0.6" fill="#8a8a8a"/></svg>
<div class="t" style="left:81.6px;top:553.57px;font-size:8.70px;color:#1e1e1e;">Compression</div>
<div class="a" style="left:59.3px;top:572px;width:4.700000000000003px;height:1px;background:transparent;background-image:linear-gradient(90deg,#b4b4b4 60%,transparent 60%);background-size:3px 1px;"></div>
<svg class="a" style="left:48.3px;top:565.63px;" width="12" height="12" viewBox="0 0 12 12"><circle cx="6" cy="6" r="4.7" fill="#fff" stroke="#767676" stroke-width="1.25"/><path d="M3.8 6H8.2" stroke="#3a6cc2" stroke-width="1.5"/><path d="M6 3.7V8.3" stroke="#3a6cc2" stroke-width="1.5"/></svg>
<svg class="a" style="left:65px;top:566.23px;" width="12" height="12" viewBox="0 0 12 12"><path d="M1.6 2.6H5L5.8 3.6H10.8V10.6H1.6Z" fill="#747474"/><rect x="1.6" y="4.6" width="9.2" height="0.6" fill="#8a8a8a"/></svg>
<div class="t" style="left:81.6px;top:567.86px;font-size:8.70px;color:#1e1e1e;">Directories</div>
<div class="a" style="left:59.3px;top:587px;width:4.700000000000003px;height:1px;background:transparent;background-image:linear-gradient(90deg,#b4b4b4 60%,transparent 60%);background-size:3px 1px;"></div>
<svg class="a" style="left:48.3px;top:579.92px;" width="12" height="12" viewBox="0 0 12 12"><circle cx="6" cy="6" r="4.7" fill="#fff" stroke="#767676" stroke-width="1.25"/><path d="M3.8 6H8.2" stroke="#3a6cc2" stroke-width="1.5"/><path d="M6 3.7V8.3" stroke="#3a6cc2" stroke-width="1.5"/></svg>
<svg class="a" style="left:65px;top:580.52px;" width="12" height="12" viewBox="0 0 12 12"><path d="M1.6 2.6H5L5.8 3.6H10.8V10.6H1.6Z" fill="#747474"/><rect x="1.6" y="4.6" width="9.2" height="0.6" fill="#8a8a8a"/></svg>
<div class="t" style="left:81.6px;top:582.15px;font-size:8.70px;color:#1e1e1e;">Keyboard</div>
<div class="a" style="left:59.3px;top:601px;width:4.700000000000003px;height:1px;background:transparent;background-image:linear-gradient(90deg,#b4b4b4 60%,transparent 60%);background-size:3px 1px;"></div>
<svg class="a" style="left:48.3px;top:594.2099999999999px;" width="12" height="12" viewBox="0 0 12 12"><circle cx="6" cy="6" r="4.7" fill="#fff" stroke="#767676" stroke-width="1.25"/><path d="M3.8 6H8.2" stroke="#3a6cc2" stroke-width="1.5"/><path d="M6 3.7V8.3" stroke="#3a6cc2" stroke-width="1.5"/></svg>
<svg class="a" style="left:65px;top:594.81px;" width="12" height="12" viewBox="0 0 12 12"><path d="M1.6 2.6H5L5.8 3.6H10.8V10.6H1.6Z" fill="#747474"/><rect x="1.6" y="4.6" width="9.2" height="0.6" fill="#8a8a8a"/></svg>
<div class="t" style="left:81.6px;top:596.44px;font-size:8.70px;color:#1e1e1e;">Mouse</div>
<div class="a" style="left:59.3px;top:615px;width:4.700000000000003px;height:1px;background:transparent;background-image:linear-gradient(90deg,#b4b4b4 60%,transparent 60%);background-size:3px 1px;"></div>
<svg class="a" style="left:48.3px;top:608.5px;" width="12" height="12" viewBox="0 0 12 12"><circle cx="6" cy="6" r="4.7" fill="#fff" stroke="#767676" stroke-width="1.25"/><path d="M3.8 6H8.2" stroke="#3a6cc2" stroke-width="1.5"/><path d="M6 3.7V8.3" stroke="#3a6cc2" stroke-width="1.5"/></svg>
<svg class="a" style="left:65px;top:609.1px;" width="12" height="12" viewBox="0 0 12 12"><path d="M1.6 2.6H5L5.8 3.6H10.8V10.6H1.6Z" fill="#747474"/><rect x="1.6" y="4.6" width="9.2" height="0.6" fill="#8a8a8a"/></svg>
<div class="t" style="left:81.6px;top:610.73px;font-size:8.70px;color:#1e1e1e;">Path</div>
<svg class="a" style="left:290.7px;top:112px;" width="7" height="13" viewBox="0 0 7 13"><rect x="0.5" y="0.5" width="3" height="2.5" rx="0.5" fill="#6d6d6d"/><rect x="1.4" y="2.5" width="1.2" height="6" fill="#6d6d6d"/><rect x="0.5" y="8.5" width="3" height="2.5" rx="0.5" fill="#6d6d6d"/></svg>
<svg class="a" style="left:308px;top:112px;" width="9" height="13" viewBox="0 0 9 13"><rect x="0.5" y="0.5" width="3" height="2.5" rx="0.5" fill="#6d6d6d"/><rect x="1.4" y="2.5" width="1.2" height="6.5" fill="#6d6d6d"/><rect x="1.4" y="8" width="4" height="1.2" fill="#6d6d6d"/><rect x="4.5" y="7.8" width="3" height="2.5" rx="0.5" fill="#6d6d6d"/></svg>
<svg class="a" style="left:326px;top:112px;" width="11" height="13" viewBox="0 0 11 13"><rect x="0.5" y="0.5" width="3" height="2.5" rx="0.5" fill="#6d6d6d"/><rect x="1.4" y="2.5" width="1.2" height="6.5" fill="#6d6d6d"/><rect x="1.4" y="8" width="4" height="1.2" fill="#6d6d6d"/><rect x="4.5" y="7.8" width="3" height="2.5" rx="0.5" fill="#6d6d6d"/><rect x="7.6" y="0.5" width="1.3" height="5.5" fill="#e8452c"/><rect x="7.6" y="7" width="1.3" height="1.3" fill="#e8452c"/></svg>
<div class="a" style="left:342px;top:111px;width:1px;height:15px;background:#b0b0b0;"></div>
<svg class="a" style="left:347px;top:113px;" width="11" height="11" viewBox="0 0 11 11"><rect x="0.6" y="0.6" width="9.3" height="9.3" fill="#fff" stroke="#555" stroke-width="1.1"/><path d="M2.5 5L4.5 7.2L8.5 2.5" fill="none" stroke="#333" stroke-width="1"/></svg>
<div class="t" style="left:361.7px;top:114.27px;font-size:9.01px;color:#222;transform:scaleX(0.880);transform-origin:left center;">Sync View</div>
<div class="a" style="left:405px;top:111px;width:1px;height:15px;background:#b0b0b0;"></div>
<svg class="a" style="left:412px;top:112.4px;" width="12" height="12" viewBox="0 0 12 12"><circle cx="6" cy="6" r="5.1" fill="#fff" stroke="#6d6d6d" stroke-width="1.1"/><path d="M4.5 3.2L8.7 6L4.5 8.8Z" fill="#3cb24a"/></svg>
<svg class="a" style="left:430px;top:112.4px;" width="12" height="12" viewBox="0 0 12 12"><circle cx="6" cy="6" r="5.1" fill="#fff" stroke="#6d6d6d" stroke-width="1.1"/><rect x="5.4" y="3.3" width="1.3" height="5.4" fill="#e8452c"/></svg>
<div class="a" style="left:449px;top:111px;width:1px;height:15px;background:#b0b0b0;"></div>
<svg class="a" style="left:456px;top:112.4px;" width="12" height="12" viewBox="0 0 12 12"><circle cx="6" cy="6" r="5.1" fill="#fff" stroke="#6d6d6d" stroke-width="1.1"/><circle cx="6" cy="6" r="2.8" fill="#e8452c"/></svg>
<svg class="a" style="left:474px;top:112.4px;" width="12" height="12" viewBox="0 0 12 12"><circle cx="6" cy="6" r="5.1" fill="#fff" stroke="#6d6d6d" stroke-width="1.1"/><circle cx="6" cy="6" r="2.8" fill="none" stroke="#e8452c" stroke-width="1.6"/></svg>
<svg class="a" style="left:492px;top:112.4px;" width="13" height="13" viewBox="0 0 13 13"><circle cx="7.5" cy="4" r="3" fill="none" stroke="#6d6d6d" stroke-width="1.1"/><circle cx="4" cy="7.5" r="3" fill="none" stroke="#6d6d6d" stroke-width="1.1"/><path d="M7.5 10L9 11.5L12 8.5" fill="none" stroke="#3cb24a" stroke-width="1.2"/></svg>
<svg class="a" style="left:511px;top:112.4px;" width="13" height="13" viewBox="0 0 13 13"><circle cx="7.5" cy="4" r="3" fill="none" stroke="#6d6d6d" stroke-width="1.1"/><circle cx="4" cy="7.5" r="3" fill="none" stroke="#6d6d6d" stroke-width="1.1"/><path d="M8 11.5L12 7.5" stroke="#e8452c" stroke-width="1.5"/></svg>
<svg class="a" style="left:529px;top:112.4px;" width="13" height="13" viewBox="0 0 13 13"><circle cx="7.5" cy="4" r="3" fill="none" stroke="#6d6d6d" stroke-width="1.1"/><circle cx="4" cy="7.5" r="3" fill="none" stroke="#6d6d6d" stroke-width="1.1"/><path d="M8.5 8L12 11.5M12 8L8.5 11.5" stroke="#e8452c" stroke-width="1.2"/></svg>
<div class="a" style="left:548px;top:111px;width:1px;height:15px;background:#b0b0b0;"></div>
<svg class="a" style="left:555px;top:113.4px;" width="12" height="10" viewBox="0 0 12 10"><path d="M0 0H11.5V7H9.5V9.5L7.5 7H0Z" fill="#6d6d6d"/><path d="M2.5 3.5H5M3.75 2.25V4.75" stroke="#fff" stroke-width="0.8"/></svg>
<svg class="a" style="left:573px;top:113.4px;" width="12" height="10" viewBox="0 0 12 10"><path d="M0 0H11.5V7H9.5V9.5L7.5 7H0Z" fill="#6d6d6d"/><path d="M2.5 2.3L4.8 4.6M4.8 2.3L2.5 4.6" stroke="#fff" stroke-width="0.8"/></svg>
<div class="a" style="left:592px;top:111px;width:1px;height:15px;background:#b0b0b0;"></div>
<svg class="a" style="left:598.5px;top:112.4px;" width="12" height="12" viewBox="0 0 12 12"><rect x="0.6" y="0.6" width="10.8" height="10.8" fill="#fff" stroke="#6d6d6d" stroke-width="1.1"/><circle cx="6" cy="6" r="3" fill="none" stroke="#6d6d6d" stroke-width="0.9"/><path d="M6 6L4 7.5" stroke="#6d6d6d" stroke-width="0.9"/></svg>
<svg class="a" style="left:617px;top:112.4px;" width="12" height="12" viewBox="0 0 12 12"><rect x="0.6" y="0.6" width="10.8" height="10.8" fill="#fff" stroke="#6d6d6d" stroke-width="1.1"/><circle cx="6" cy="6" r="3" fill="none" stroke="#6d6d6d" stroke-width="0.9"/><path d="M6 6L5 4" stroke="#6d6d6d" stroke-width="0.9"/></svg>
<svg class="a" style="left:636px;top:112.4px;" width="12" height="12" viewBox="0 0 12 12"><rect x="0.6" y="0.6" width="10.8" height="10.8" fill="#fff" stroke="#6d6d6d" stroke-width="1.1"/><circle cx="6" cy="6" r="3" fill="none" stroke="#6d6d6d" stroke-width="0.9"/><path d="M6 6L6 3.5" stroke="#6d6d6d" stroke-width="0.9"/></svg>
<svg class="a" style="left:654.5px;top:112.4px;" width="12" height="12" viewBox="0 0 12 12"><rect x="0.6" y="0.6" width="10.8" height="10.8" fill="#fff" stroke="#6d6d6d" stroke-width="1.1"/><circle cx="6" cy="6" r="3" fill="none" stroke="#6d6d6d" stroke-width="0.9"/><path d="M6 6L7.5 4" stroke="#6d6d6d" stroke-width="0.9"/></svg>
<div class="a" style="left:672px;top:111px;width:1px;height:15px;background:#b0b0b0;"></div>
<svg class="a" style="left:679px;top:112.4px;" width="12" height="12" viewBox="0 0 12 12"><circle cx="6" cy="6" r="5.1" fill="#fff" stroke="#6d6d6d" stroke-width="1.1"/><path d="M6.8 3.5L4.5 6L6.8 8.5" fill="none" stroke="#6d6d6d" stroke-width="1.2"/></svg>
<svg class="a" style="left:698px;top:112.4px;" width="12" height="12" viewBox="0 0 12 12"><circle cx="6" cy="6" r="5.1" fill="#fff" stroke="#6d6d6d" stroke-width="1.1"/><path d="M5.2 3.5L7.5 6L5.2 8.5" fill="none" stroke="#6d6d6d" stroke-width="1.2"/></svg>
<svg class="a" style="left:716px;top:112.4px;" width="12" height="12" viewBox="0 0 12 12"><circle cx="6" cy="6" r="5.1" fill="#fff" stroke="#6d6d6d" stroke-width="1.1"/><path d="M3.5 6.8L6 4.5L8.5 6.8" fill="none" stroke="#6d6d6d" stroke-width="1.2"/></svg>
<svg class="a" style="left:735px;top:112.4px;" width="12" height="12" viewBox="0 0 12 12"><circle cx="6" cy="6" r="5.1" fill="#fff" stroke="#6d6d6d" stroke-width="1.1"/><path d="M3.5 5.2L6 7.5L8.5 5.2" fill="none" stroke="#6d6d6d" stroke-width="1.2"/></svg>
<svg class="a" style="left:753px;top:112.4px;" width="12" height="12" viewBox="0 0 12 12"><circle cx="6" cy="6" r="5.1" fill="#fff" stroke="#6d6d6d" stroke-width="1.1"/><path d="M8 8.5V6.5A2 2 0 0 0 6 4.5H4M5.5 3L4 4.5L5.5 6" fill="none" stroke="#6d6d6d" stroke-width="1.1"/></svg>
<svg class="a" style="left:772px;top:112.4px;" width="12" height="12" viewBox="0 0 12 12"><circle cx="6" cy="6" r="5.1" fill="#fff" stroke="#6d6d6d" stroke-width="1.1"/><circle cx="6" cy="6" r="1.6" fill="#6d6d6d"/></svg>
<div class="a" style="left:282px;top:131px;width:717px;height:5px;background:#cbcbcb;"></div>
<div class="a" style="left:628px;top:131px;width:25px;height:5px;background:#2b579a;"></div>
<svg class="a" style="left:637px;top:132px;" width="6" height="3" viewBox="0 0 6 3"><path d="M0.5 2.8L3 0.3L5.5 2.8Z" fill="#fff"/></svg>
<div class="a" style="left:282px;top:136px;width:717px;height:17.4px;background:#a5bfe4;"></div>
<svg class="a" style="left:284px;top:138px;" width="4" height="13" viewBox="0 0 4 13"><rect x="1" y="1.5" width="1.3" height="1.3" fill="#3a4f80"/><rect x="1" y="4.5" width="1.3" height="1.3" fill="#3a4f80"/><rect x="1" y="7.5" width="1.3" height="1.3" fill="#3a4f80"/><rect x="1" y="10.5" width="1.3" height="1.3" fill="#3a4f80"/></svg>
<div class="t" style="left:290px;top:140.62px;font-size:8.72px;color:#1e1e1e;transform:scaleX(0.920);transform-origin:left center;">001-FunctionalTests\Can\Can_Jitter_Test.mgn</div>
<div class="a" style="left:282px;top:153.4px;width:705.5px;height:239px;overflow:hidden;">
<div class="a" style="left:0;top:0.00px;width:705.5px;height:12.87px;background:#fff;"></div>
<div class="a" style="left:11px;top:0.00px;width:1px;height:12.87px;background-image:linear-gradient(#b0b0b0 50%,transparent 50%);background-size:1px 2px;"></div>
<svg class="a" style="left:26px;top:0.43px" width="12" height="12"><circle cx="6" cy="6" r="4.7" fill="none" stroke="#737373" stroke-width="1.25"/><path d="M3.7 6H8.3" stroke="#3a6cc2" stroke-width="1.7"/><path d="M6 3.7V8.3" stroke="#3a6cc2" stroke-width="1.7"/></svg>
<div class="a" style="left:38.5px;top:6px;width:2.5px;height:1px;background:#a8a8a8;"></div>
<svg class="a" style="left:44px;top:0.43px" width="12" height="12"><path d="M2.5 0.5H0.8V11.5H2.5M9.5 0.5H11.2V11.5H9.5" fill="none" stroke="#777" stroke-width="1"/><path d="M3.5 3.5L6 9L8.5 3.5" fill="none" stroke="#666" stroke-width="0.9"/></svg>
<svg class="a" style="left:59px;top:1.23px" width="10.5" height="10.5"><rect width="10.5" height="10.5" fill="#4cb54f"/><path d="M2.5 5.3L4.5 7.3L8 3.3" fill="none" stroke="#e8f5e8" stroke-width="0.9"/></svg>
<div class="t" style="left:73px;top:3.70px;font-size:8.32px;font-family:&quot;Liberation Mono&quot;,monospace;"><span style="color:#1e1e1e">Define Variable (</span><span style="color:#d5502a">&quot;Local&quot;</span><span style="color:#1e1e1e">, </span><span style="color:#d5502a">&quot;CanIntervalMilliseconds&quot;</span><span style="color:#1e1e1e">, </span><span style="color:#a94fc4">False</span><span style="color:#1e1e1e">, </span><span style="color:#d5502a">&quot;Floating Point&quot;</span><span style="color:#1e1e1e">, </span><span style="color:#a94fc4">100</span><span style="color:#1e1e1e">)</span></div>
<div class="t" style="left:653px;top:2.70px;font-size:8.32px;color:#333;font-family:&quot;Liberation Mono&quot;,monospace;">0040</div>
<div class="a" style="left:0;top:12.87px;width:705.5px;height:12.87px;background:#f0f0f0;"></div>
<div class="a" style="left:11px;top:12.87px;width:1px;height:12.87px;background-image:linear-gradient(#b0b0b0 50%,transparent 50%);background-size:1px 2px;"></div>
<svg class="a" style="left:26px;top:13.30px" width="12" height="12"><circle cx="6" cy="6" r="4.7" fill="none" stroke="#737373" stroke-width="1.25"/><path d="M3.7 6H8.3" stroke="#3a6cc2" stroke-width="1.7"/><path d="M6 3.7V8.3" stroke="#3a6cc2" stroke-width="1.7"/></svg>
<div class="a" style="left:38.5px;top:19px;width:2.5px;height:1px;background:#a8a8a8;"></div>
<svg class="a" style="left:44px;top:13.30px" width="12" height="12"><path d="M2.5 0.5H0.8V11.5H2.5M9.5 0.5H11.2V11.5H9.5" fill="none" stroke="#777" stroke-width="1"/><path d="M3.5 3.5L6 9L8.5 3.5" fill="none" stroke="#666" stroke-width="0.9"/></svg>
<svg class="a" style="left:59px;top:14.11px" width="10.5" height="10.5"><rect width="10.5" height="10.5" fill="#4cb54f"/><path d="M2.5 5.3L4.5 7.3L8 3.3" fill="none" stroke="#e8f5e8" stroke-width="0.9"/></svg>
<div class="t" style="left:73px;top:16.57px;font-size:8.32px;font-family:&quot;Liberation Mono&quot;,monospace;"><span style="color:#1e1e1e">Define Variable (</span><span style="color:#d5502a">&quot;Local&quot;</span><span style="color:#1e1e1e">, </span><span style="color:#d5502a">&quot;CanIntervalMillisecondsMin&quot;</span><span style="color:#1e1e1e">, </span><span style="color:#a94fc4">False</span><span style="color:#1e1e1e">, </span><span style="color:#d5502a">&quot;Floating Point&quot;</span><span style="color:#1e1e1e">, </span><span style="color:#a94fc4">50</span><span style="color:#1e1e1e">)</span></div>
<div class="t" style="left:653px;top:15.57px;font-size:8.32px;color:#333;font-family:&quot;Liberation Mono&quot;,monospace;">0041</div>
<div class="a" style="left:0;top:25.74px;width:705.5px;height:12.87px;background:#fff;"></div>
<div class="a" style="left:11px;top:25.74px;width:1px;height:12.87px;background-image:linear-gradient(#b0b0b0 50%,transparent 50%);background-size:1px 2px;"></div>
<svg class="a" style="left:26px;top:26.17px" width="12" height="12"><circle cx="6" cy="6" r="4.7" fill="none" stroke="#737373" stroke-width="1.25"/><path d="M3.7 6H8.3" stroke="#3a6cc2" stroke-width="1.7"/><path d="M6 3.7V8.3" stroke="#3a6cc2" stroke-width="1.7"/></svg>
<div class="a" style="left:38.5px;top:32px;width:2.5px;height:1px;background:#a8a8a8;"></div>
<svg class="a" style="left:44px;top:26.17px" width="12" height="12"><path d="M2.5 0.5H0.8V11.5H2.5M9.5 0.5H11.2V11.5H9.5" fill="none" stroke="#777" stroke-width="1"/><path d="M3.5 3.5L6 9L8.5 3.5" fill="none" stroke="#666" stroke-width="0.9"/></svg>
<svg class="a" style="left:59px;top:26.97px" width="10.5" height="10.5"><rect width="10.5" height="10.5" fill="#4cb54f"/><path d="M2.5 5.3L4.5 7.3L8 3.3" fill="none" stroke="#e8f5e8" stroke-width="0.9"/></svg>
<div class="t" style="left:73px;top:29.44px;font-size:8.32px;font-family:&quot;Liberation Mono&quot;,monospace;"><span style="color:#1e1e1e">Define Variable (</span><span style="color:#d5502a">&quot;Local&quot;</span><span style="color:#1e1e1e">, </span><span style="color:#d5502a">&quot;CanIntervalMillisecondsMax&quot;</span><span style="color:#1e1e1e">, </span><span style="color:#a94fc4">False</span><span style="color:#1e1e1e">, </span><span style="color:#d5502a">&quot;Floating Point&quot;</span><span style="color:#1e1e1e">, </span><span style="color:#a94fc4">150</span><span style="color:#1e1e1e">)</span></div>
<div class="t" style="left:653px;top:28.44px;font-size:8.32px;color:#333;font-family:&quot;Liberation Mono&quot;,monospace;">0042</div>
<div class="a" style="left:0;top:38.61px;width:705.5px;height:12.87px;background:#f0f0f0;"></div>
<div class="a" style="left:11px;top:38.61px;width:1px;height:12.87px;background-image:linear-gradient(#b0b0b0 50%,transparent 50%);background-size:1px 2px;"></div>
<svg class="a" style="left:26px;top:39.05px" width="12" height="12"><circle cx="6" cy="6" r="4.7" fill="none" stroke="#737373" stroke-width="1.25"/><path d="M3.7 6H8.3" stroke="#3a6cc2" stroke-width="1.7"/><path d="M6 3.7V8.3" stroke="#3a6cc2" stroke-width="1.7"/></svg>
<div class="a" style="left:38.5px;top:45px;width:2.5px;height:1px;background:#a8a8a8;"></div>
<svg class="a" style="left:44px;top:39.05px" width="12" height="12"><path d="M2.5 0.5H0.8V11.5H2.5M9.5 0.5H11.2V11.5H9.5" fill="none" stroke="#777" stroke-width="1"/><path d="M3.5 3.5L6 9L8.5 3.5" fill="none" stroke="#666" stroke-width="0.9"/></svg>
<svg class="a" style="left:59px;top:39.84px" width="10.5" height="10.5"><rect width="10.5" height="10.5" fill="#4cb54f"/><path d="M2.5 5.3L4.5 7.3L8 3.3" fill="none" stroke="#e8f5e8" stroke-width="0.9"/></svg>
<div class="t" style="left:73px;top:42.31px;font-size:8.32px;font-family:&quot;Liberation Mono&quot;,monospace;"><span style="color:#1e1e1e">Define Variable (</span><span style="color:#d5502a">&quot;Local&quot;</span><span style="color:#1e1e1e">, </span><span style="color:#d5502a">&quot;TicksLast&quot;</span><span style="color:#1e1e1e">, </span><span style="color:#a94fc4">False</span><span style="color:#1e1e1e">, </span><span style="color:#d5502a">&quot;Number&quot;</span><span style="color:#1e1e1e">, </span><span style="color:#a94fc4">0</span><span style="color:#1e1e1e">)</span></div>
<div class="t" style="left:653px;top:41.31px;font-size:8.32px;color:#333;font-family:&quot;Liberation Mono&quot;,monospace;">0043</div>
<div class="a" style="left:0;top:51.48px;width:705.5px;height:12.87px;background:#fff;"></div>
<div class="a" style="left:11px;top:51.48px;width:1px;height:12.87px;background-image:linear-gradient(#b0b0b0 50%,transparent 50%);background-size:1px 2px;"></div>
<svg class="a" style="left:26px;top:51.91px" width="12" height="12"><circle cx="6" cy="6" r="4.7" fill="none" stroke="#737373" stroke-width="1.25"/><path d="M3.7 6H8.3" stroke="#3a6cc2" stroke-width="1.7"/><path d="M6 3.7V8.3" stroke="#3a6cc2" stroke-width="1.7"/></svg>
<div class="a" style="left:38.5px;top:58px;width:2.5px;height:1px;background:#a8a8a8;"></div>
<svg class="a" style="left:44px;top:51.91px" width="12" height="12"><path d="M2.5 0.5H0.8V11.5H2.5M9.5 0.5H11.2V11.5H9.5" fill="none" stroke="#777" stroke-width="1"/><path d="M3.5 3.5L6 9L8.5 3.5" fill="none" stroke="#666" stroke-width="0.9"/></svg>
<svg class="a" style="left:59px;top:52.71px" width="10.5" height="10.5"><rect width="10.5" height="10.5" fill="#4cb54f"/><path d="M2.5 5.3L4.5 7.3L8 3.3" fill="none" stroke="#e8f5e8" stroke-width="0.9"/></svg>
<div class="t" style="left:73px;top:55.18px;font-size:8.32px;font-family:&quot;Liberation Mono&quot;,monospace;"><span style="color:#1e1e1e">Define Variable (</span><span style="color:#d5502a">&quot;Local&quot;</span><span style="color:#1e1e1e">, </span><span style="color:#d5502a">&quot;TicksActual&quot;</span><span style="color:#1e1e1e">, </span><span style="color:#a94fc4">False</span><span style="color:#1e1e1e">, </span><span style="color:#d5502a">&quot;Number&quot;</span><span style="color:#1e1e1e">, </span><span style="color:#a94fc4">0</span><span style="color:#1e1e1e">)</span></div>
<div class="t" style="left:653px;top:54.18px;font-size:8.32px;color:#333;font-family:&quot;Liberation Mono&quot;,monospace;">0044</div>
<div class="a" style="left:0;top:64.35px;width:705.5px;height:12.87px;background:#f0f0f0;"></div>
<div class="a" style="left:11px;top:64.35px;width:1px;height:12.87px;background-image:linear-gradient(#b0b0b0 50%,transparent 50%);background-size:1px 2px;"></div>
<svg class="a" style="left:26px;top:64.78px" width="12" height="12"><circle cx="6" cy="6" r="4.7" fill="none" stroke="#737373" stroke-width="1.25"/><path d="M3.7 6H8.3" stroke="#3a6cc2" stroke-width="1.7"/><path d="M6 3.7V8.3" stroke="#3a6cc2" stroke-width="1.7"/></svg>
<div class="a" style="left:38.5px;top:71px;width:2.5px;height:1px;background:#a8a8a8;"></div>
<svg class="a" style="left:44px;top:64.78px" width="12" height="12"><path d="M2.5 0.5H0.8V11.5H2.5M9.5 0.5H11.2V11.5H9.5" fill="none" stroke="#777" stroke-width="1"/><path d="M3.5 3.5L6 9L8.5 3.5" fill="none" stroke="#666" stroke-width="0.9"/></svg>
<svg class="a" style="left:59px;top:65.58px" width="10.5" height="10.5"><rect width="10.5" height="10.5" fill="#4cb54f"/><path d="M2.5 5.3L4.5 7.3L8 3.3" fill="none" stroke="#e8f5e8" stroke-width="0.9"/></svg>
<div class="t" style="left:73px;top:68.05px;font-size:8.32px;font-family:&quot;Liberation Mono&quot;,monospace;"><span style="color:#1e1e1e">Define Variable (</span><span style="color:#d5502a">&quot;Local&quot;</span><span style="color:#1e1e1e">, </span><span style="color:#d5502a">&quot;TicksDiff&quot;</span><span style="color:#1e1e1e">, </span><span style="color:#a94fc4">False</span><span style="color:#1e1e1e">, </span><span style="color:#d5502a">&quot;Number&quot;</span><span style="color:#1e1e1e">, </span><span style="color:#a94fc4">0</span><span style="color:#1e1e1e">)</span></div>
<div class="t" style="left:653px;top:67.05px;font-size:8.32px;color:#333;font-family:&quot;Liberation Mono&quot;,monospace;">0045</div>
<div class="a" style="left:0;top:77.22px;width:705.5px;height:12.87px;background:#fff;"></div>
<div class="a" style="left:11px;top:77.22px;width:1px;height:12.87px;background-image:linear-gradient(#b0b0b0 50%,transparent 50%);background-size:1px 2px;"></div>
<svg class="a" style="left:26px;top:77.66px" width="12" height="12"><circle cx="6" cy="6" r="4.7" fill="none" stroke="#737373" stroke-width="1.25"/><path d="M3.7 6H8.3" stroke="#3a6cc2" stroke-width="1.7"/><path d="M6 3.7V8.3" stroke="#3a6cc2" stroke-width="1.7"/></svg>
<div class="a" style="left:38.5px;top:84px;width:2.5px;height:1px;background:#a8a8a8;"></div>
<svg class="a" style="left:44px;top:77.66px" width="12" height="12"><path d="M2.5 0.5H0.8V11.5H2.5M9.5 0.5H11.2V11.5H9.5" fill="none" stroke="#777" stroke-width="1"/><path d="M3.5 3.5L6 9L8.5 3.5" fill="none" stroke="#666" stroke-width="0.9"/></svg>
<svg class="a" style="left:59px;top:78.45px" width="10.5" height="10.5"><rect width="10.5" height="10.5" fill="#4cb54f"/><path d="M2.5 5.3L4.5 7.3L8 3.3" fill="none" stroke="#e8f5e8" stroke-width="0.9"/></svg>
<div class="t" style="left:73px;top:80.92px;font-size:8.32px;font-family:&quot;Liberation Mono&quot;,monospace;"><span style="color:#1e1e1e">Define Variable (</span><span style="color:#d5502a">&quot;Local&quot;</span><span style="color:#1e1e1e">, </span><span style="color:#d5502a">&quot;TicksDiffMilliseconds&quot;</span><span style="color:#1e1e1e">, </span><span style="color:#a94fc4">False</span><span style="color:#1e1e1e">, </span><span style="color:#d5502a">&quot;Floating Point&quot;</span><span style="color:#1e1e1e">, </span><span style="color:#a94fc4">0</span><span style="color:#1e1e1e">)</span></div>
<div class="t" style="left:653px;top:79.92px;font-size:8.32px;color:#333;font-family:&quot;Liberation Mono&quot;,monospace;">0046</div>
<div class="a" style="left:0;top:90.09px;width:705.5px;height:12.87px;background:#f0f0f0;"></div>
<div class="a" style="left:11px;top:90.09px;width:1px;height:12.87px;background-image:linear-gradient(#b0b0b0 50%,transparent 50%);background-size:1px 2px;"></div>
<svg class="a" style="left:26px;top:90.52px" width="12" height="12"><circle cx="6" cy="6" r="4.7" fill="none" stroke="#737373" stroke-width="1.25"/><path d="M3.7 6H8.3" stroke="#3a6cc2" stroke-width="1.7"/><path d="M6 3.7V8.3" stroke="#3a6cc2" stroke-width="1.7"/></svg>
<div class="a" style="left:38.5px;top:97px;width:2.5px;height:1px;background:#a8a8a8;"></div>
<svg class="a" style="left:44px;top:90.52px" width="12" height="12"><path d="M2.5 0.5H0.8V11.5H2.5M9.5 0.5H11.2V11.5H9.5" fill="none" stroke="#777" stroke-width="1"/><path d="M3.5 3.5L6 9L8.5 3.5" fill="none" stroke="#666" stroke-width="0.9"/></svg>
<svg class="a" style="left:59px;top:91.32px" width="10.5" height="10.5"><rect width="10.5" height="10.5" fill="#4cb54f"/><path d="M2.5 5.3L4.5 7.3L8 3.3" fill="none" stroke="#e8f5e8" stroke-width="0.9"/></svg>
<div class="t" style="left:73px;top:93.79px;font-size:8.32px;font-family:&quot;Liberation Mono&quot;,monospace;"><span style="color:#1e1e1e">Define Variable (</span><span style="color:#d5502a">&quot;Local&quot;</span><span style="color:#1e1e1e">, </span><span style="color:#d5502a">&quot;TicksDiffMillisecondsMin&quot;</span><span style="color:#1e1e1e">, </span><span style="color:#a94fc4">False</span><span style="color:#1e1e1e">, </span><span style="color:#d5502a">&quot;Floating Point&quot;</span><span style="color:#1e1e1e">, </span><span style="color:#a94fc4">1000</span><span style="color:#1e1e1e">)</span></div>
<div class="t" style="left:653px;top:92.79px;font-size:8.32px;color:#333;font-family:&quot;Liberation Mono&quot;,monospace;">0047</div>
<div class="a" style="left:0;top:102.96px;width:705.5px;height:12.87px;background:#fff;"></div>
<div class="a" style="left:11px;top:102.96px;width:1px;height:12.87px;background-image:linear-gradient(#b0b0b0 50%,transparent 50%);background-size:1px 2px;"></div>
<svg class="a" style="left:26px;top:103.39px" width="12" height="12"><circle cx="6" cy="6" r="4.7" fill="none" stroke="#737373" stroke-width="1.25"/><path d="M3.7 6H8.3" stroke="#3a6cc2" stroke-width="1.7"/><path d="M6 3.7V8.3" stroke="#3a6cc2" stroke-width="1.7"/></svg>
<div class="a" style="left:38.5px;top:109px;width:2.5px;height:1px;background:#a8a8a8;"></div>
<svg class="a" style="left:44px;top:103.39px" width="12" height="12"><path d="M2.5 0.5H0.8V11.5H2.5M9.5 0.5H11.2V11.5H9.5" fill="none" stroke="#777" stroke-width="1"/><path d="M3.5 3.5L6 9L8.5 3.5" fill="none" stroke="#666" stroke-width="0.9"/></svg>
<svg class="a" style="left:59px;top:104.19px" width="10.5" height="10.5"><rect width="10.5" height="10.5" fill="#4cb54f"/><path d="M2.5 5.3L4.5 7.3L8 3.3" fill="none" stroke="#e8f5e8" stroke-width="0.9"/></svg>
<div class="t" style="left:73px;top:106.66px;font-size:8.32px;font-family:&quot;Liberation Mono&quot;,monospace;"><span style="color:#1e1e1e">Define Variable (</span><span style="color:#d5502a">&quot;Local&quot;</span><span style="color:#1e1e1e">, </span><span style="color:#d5502a">&quot;TicksDiffMillisecondsMax&quot;</span><span style="color:#1e1e1e">, </span><span style="color:#a94fc4">False</span><span style="color:#1e1e1e">, </span><span style="color:#d5502a">&quot;Floating Point&quot;</span><span style="color:#1e1e1e">, </span><span style="color:#a94fc4">0</span><span style="color:#1e1e1e">)</span></div>
<div class="t" style="left:653px;top:105.66px;font-size:8.32px;color:#333;font-family:&quot;Liberation Mono&quot;,monospace;">0048</div>
<div class="a" style="left:0;top:115.83px;width:705.5px;height:12.87px;background:#f0f0f0;"></div>
<div class="a" style="left:11px;top:115.83px;width:1px;height:12.87px;background-image:linear-gradient(#b0b0b0 50%,transparent 50%);background-size:1px 2px;"></div>
<svg class="a" style="left:26px;top:116.27px" width="12" height="12"><circle cx="6" cy="6" r="4.7" fill="none" stroke="#737373" stroke-width="1.25"/><path d="M3.7 6H8.3" stroke="#3a6cc2" stroke-width="1.7"/><path d="M6 3.7V8.3" stroke="#3a6cc2" stroke-width="1.7"/></svg>
<div class="a" style="left:38.5px;top:122px;width:2.5px;height:1px;background:#a8a8a8;"></div>
<svg class="a" style="left:44px;top:116.27px" width="12" height="12"><path d="M2.5 0.5H0.8V11.5H2.5M9.5 0.5H11.2V11.5H9.5" fill="none" stroke="#777" stroke-width="1"/><path d="M3.5 3.5L6 9L8.5 3.5" fill="none" stroke="#666" stroke-width="0.9"/></svg>
<svg class="a" style="left:59px;top:117.06px" width="10.5" height="10.5"><rect width="10.5" height="10.5" fill="#4cb54f"/><path d="M2.5 5.3L4.5 7.3L8 3.3" fill="none" stroke="#e8f5e8" stroke-width="0.9"/></svg>
<div class="t" style="left:73px;top:119.53px;font-size:8.32px;font-family:&quot;Liberation Mono&quot;,monospace;"><span style="color:#1e1e1e">Define Variable (</span><span style="color:#d5502a">&quot;Local&quot;</span><span style="color:#1e1e1e">, </span><span style="color:#d5502a">&quot;StandardDeviation&quot;</span><span style="color:#1e1e1e">, </span><span style="color:#a94fc4">False</span><span style="color:#1e1e1e">, </span><span style="color:#d5502a">&quot;Floating Point&quot;</span><span style="color:#1e1e1e">, </span><span style="color:#a94fc4">0</span><span style="color:#1e1e1e">)</span></div>
<div class="t" style="left:653px;top:118.53px;font-size:8.32px;color:#333;font-family:&quot;Liberation Mono&quot;,monospace;">0049</div>
<div class="a" style="left:0;top:128.70px;width:705.5px;height:12.87px;background:#fff;"></div>
<div class="a" style="left:11px;top:128.70px;width:1px;height:12.87px;background-image:linear-gradient(#b0b0b0 50%,transparent 50%);background-size:1px 2px;"></div>
<svg class="a" style="left:26px;top:129.13px" width="12" height="12"><circle cx="6" cy="6" r="4.7" fill="none" stroke="#737373" stroke-width="1.25"/><path d="M3.7 6H8.3" stroke="#3a6cc2" stroke-width="1.7"/><path d="M6 3.7V8.3" stroke="#3a6cc2" stroke-width="1.7"/></svg>
<div class="a" style="left:38.5px;top:135px;width:2.5px;height:1px;background:#a8a8a8;"></div>
<svg class="a" style="left:44px;top:129.13px" width="12" height="12"><path d="M2.5 0.5H0.8V11.5H2.5M9.5 0.5H11.2V11.5H9.5" fill="none" stroke="#777" stroke-width="1"/><path d="M3.5 3.5L6 9L8.5 3.5" fill="none" stroke="#666" stroke-width="0.9"/></svg>
<svg class="a" style="left:59px;top:129.94px" width="10.5" height="10.5"><rect width="10.5" height="10.5" fill="#4cb54f"/><path d="M2.5 5.3L4.5 7.3L8 3.3" fill="none" stroke="#e8f5e8" stroke-width="0.9"/></svg>
<div class="t" style="left:73px;top:132.40px;font-size:8.32px;font-family:&quot;Liberation Mono&quot;,monospace;"><span style="color:#1e1e1e">Define Variable (</span><span style="color:#d5502a">&quot;Local&quot;</span><span style="color:#1e1e1e">, </span><span style="color:#d5502a">&quot;StandardDeviationMax&quot;</span><span style="color:#1e1e1e">, </span><span style="color:#a94fc4">False</span><span style="color:#1e1e1e">, </span><span style="color:#d5502a">&quot;Floating Point&quot;</span><span style="color:#1e1e1e">, </span><span style="color:#a94fc4">10</span><span style="color:#1e1e1e">)</span></div>
<div class="t" style="left:653px;top:131.40px;font-size:8.32px;color:#333;font-family:&quot;Liberation Mono&quot;,monospace;">0050</div>
<div class="a" style="left:0;top:141.57px;width:705.5px;height:12.87px;background:#f0f0f0;"></div>
<div class="a" style="left:11px;top:141.57px;width:1px;height:12.87px;background-image:linear-gradient(#b0b0b0 50%,transparent 50%);background-size:1px 2px;"></div>
<svg class="a" style="left:26px;top:142.00px" width="12" height="12"><circle cx="6" cy="6" r="4.7" fill="none" stroke="#737373" stroke-width="1.25"/><path d="M3.7 6H8.3" stroke="#3a6cc2" stroke-width="1.7"/><path d="M6 3.7V8.3" stroke="#3a6cc2" stroke-width="1.7"/></svg>
<div class="a" style="left:38.5px;top:148px;width:2.5px;height:1px;background:#a8a8a8;"></div>
<svg class="a" style="left:44px;top:142.00px" width="12" height="12"><path d="M2.5 0.5H0.8V11.5H2.5M9.5 0.5H11.2V11.5H9.5" fill="none" stroke="#777" stroke-width="1"/><path d="M3.5 3.5L6 9L8.5 3.5" fill="none" stroke="#666" stroke-width="0.9"/></svg>
<svg class="a" style="left:59px;top:142.81px" width="10.5" height="10.5"><rect width="10.5" height="10.5" fill="#4cb54f"/><path d="M2.5 5.3L4.5 7.3L8 3.3" fill="none" stroke="#e8f5e8" stroke-width="0.9"/></svg>
<div class="t" style="left:73px;top:145.27px;font-size:8.32px;font-family:&quot;Liberation Mono&quot;,monospace;"><span style="color:#1e1e1e">Define Variable (</span><span style="color:#d5502a">&quot;Local&quot;</span><span style="color:#1e1e1e">, </span><span style="color:#d5502a">&quot;Output&quot;</span><span style="color:#1e1e1e">, </span><span style="color:#a94fc4">False</span><span style="color:#1e1e1e">, </span><span style="color:#d5502a">&quot;Text&quot;</span><span style="color:#1e1e1e">, </span><span style="color:#d5502a">&quot;0&quot;</span><span style="color:#1e1e1e">)</span></div>
<div class="t" style="left:653px;top:144.27px;font-size:8.32px;color:#333;font-family:&quot;Liberation Mono&quot;,monospace;">0051</div>
<div class="a" style="left:0;top:154.44px;width:705.5px;height:12.87px;background:#fff;"></div>
<div class="a" style="left:11px;top:154.44px;width:1px;height:12.87px;background-image:linear-gradient(#b0b0b0 50%,transparent 50%);background-size:1px 2px;"></div>
<div class="a" style="left:32px;top:151.44px;width:1px;height:9.43px;background-image:linear-gradient(#a0a0a0 50%,transparent 50%);background-size:1px 2px;"></div>
<div class="a" style="left:32px;top:161px;width:12px;height:1px;background-image:linear-gradient(90deg,#a0a0a0 50%,transparent 50%);background-size:2px 1px;"></div>
<svg class="a" style="left:44px;top:154.88px" width="13" height="12"><path d="M0.5 1.5H11.5V8.5H9V11L6.5 8.5H0.5Z" fill="#6f6f6f"/><path d="M3 5H4M5.5 5H6.5M8 5H9" stroke="#ddd" stroke-width="0.9"/></svg>
<div class="t" style="left:73px;top:158.14px;font-size:8.32px;font-family:&quot;Liberation Mono&quot;,monospace;"><span style="color:#3e9a2c">Read n cycles from signal ISw_Stat (ignition switch state)</span></div>
<div class="t" style="left:653px;top:157.14px;font-size:8.32px;color:#333;font-family:&quot;Liberation Mono&quot;,monospace;">0052</div>
<div class="a" style="left:0;top:167.31px;width:705.5px;height:12.87px;background:#c5d6f0;"></div>
<div class="a" style="left:11px;top:167.31px;width:1px;height:12.87px;background-image:linear-gradient(#b0b0b0 50%,transparent 50%);background-size:1px 2px;"></div>
<svg class="a" style="left:26px;top:167.75px" width="12" height="12"><circle cx="6" cy="6" r="4.7" fill="none" stroke="#737373" stroke-width="1.25"/><path d="M3.7 6H8.3" stroke="#3a6cc2" stroke-width="1.7"/><path d="M6 3.7V8.3" stroke="#3a6cc2" stroke-width="1.7"/></svg>
<div class="a" style="left:38.5px;top:174px;width:2.5px;height:1px;background:#a8a8a8;"></div>
<svg class="a" style="left:44px;top:167.75px" width="12" height="12"><rect x="0.6" y="0.6" width="10.8" height="10.8" fill="none" stroke="#777" stroke-width="1.1"/><path d="M1.5 6.8H4.8M6.8 6.8H10.5" stroke="#666" stroke-width="0.9"/><rect x="5.2" y="6" width="1.3" height="1.6" fill="#555"/></svg>
<svg class="a" style="left:59px;top:168.55px" width="10.5" height="10.5"><rect width="10.5" height="10.5" fill="#4cb54f"/><path d="M2.5 5.3L4.5 7.3L8 3.3" fill="none" stroke="#e8f5e8" stroke-width="0.9"/></svg>
<div class="t" style="left:73px;top:171.01px;font-size:8.32px;font-family:&quot;Liberation Mono&quot;,monospace;"><span style="color:#3a93c0">EIS::</span><span style="color:#1e1e1e">ISw_Stat (</span><span style="color:#d5502a">&quot;Write&quot;</span><span style="color:#1e1e1e">, </span><span style="color:#3a93c0">WaitCycles</span><span style="color:#1e1e1e">, </span><span style="color:#d5502a">&quot;Unchanged&quot;</span><span style="color:#1e1e1e">, </span><span style="color:#d5502a">&quot;True&quot;</span><span style="color:#1e1e1e">, </span><span style="color:#d5502a">&quot;IGN_ON&quot;</span><span style="color:#1e1e1e">)</span></div>
<div class="t" style="left:653px;top:170.01px;font-size:8.32px;color:#333;font-family:&quot;Liberation Mono&quot;,monospace;">0053</div>
<div class="a" style="left:0;top:180.18px;width:705.5px;height:12.87px;background:#fff;"></div>
<div class="a" style="left:11px;top:180.18px;width:1px;height:12.87px;background-image:linear-gradient(#b0b0b0 50%,transparent 50%);background-size:1px 2px;"></div>
<svg class="a" style="left:26px;top:180.61px" width="12" height="12"><circle cx="6" cy="6" r="4.7" fill="none" stroke="#737373" stroke-width="1.25"/><path d="M3.7 6H8.3" stroke="#3a6cc2" stroke-width="1.7"/><path d="M6 3.7V8.3" stroke="#3a6cc2" stroke-width="1.7"/></svg>
<div class="a" style="left:38.5px;top:187px;width:2.5px;height:1px;background:#a8a8a8;"></div>
<svg class="a" style="left:44px;top:180.61px" width="12" height="12"><rect x="0.6" y="0.6" width="10.8" height="10.8" fill="none" stroke="#777" stroke-width="1.1"/><path d="M1.5 7.5H3.5L5 3.5L6.5 8.5L7.5 6H10.5" fill="none" stroke="#555" stroke-width="0.9"/></svg>
<svg class="a" style="left:59px;top:181.41px" width="10.5" height="10.5"><rect width="10.5" height="10.5" fill="#4cb54f"/><path d="M2.5 5.3L4.5 7.3L8 3.3" fill="none" stroke="#e8f5e8" stroke-width="0.9"/></svg>
<div class="t" style="left:73px;top:183.88px;font-size:8.32px;font-family:&quot;Liberation Mono&quot;,monospace;"><span style="color:#3a93c0">EIS::</span><span style="color:#1e1e1e">EIS_A1 Statistic Data (</span><span style="color:#a94fc4">True</span><span style="color:#1e1e1e">)</span></div>
<div class="t" style="left:653px;top:182.88px;font-size:8.32px;color:#333;font-family:&quot;Liberation Mono&quot;,monospace;">0054</div>
<div class="a" style="left:0;top:193.05px;width:705.5px;height:12.87px;background:#f0f0f0;"></div>
<div class="a" style="left:11px;top:193.05px;width:1px;height:12.87px;background-image:linear-gradient(#b0b0b0 50%,transparent 50%);background-size:1px 2px;"></div>
<svg class="a" style="left:26px;top:193.48px" width="12" height="12"><circle cx="6" cy="6" r="4.7" fill="none" stroke="#737373" stroke-width="1.25"/><path d="M3.7 6H8.3" stroke="#3a6cc2" stroke-width="1.7"/><path d="M6 3.7V8.3" stroke="#3a6cc2" stroke-width="1.7"/></svg>
<div class="a" style="left:38.5px;top:199px;width:2.5px;height:1px;background:#a8a8a8;"></div>
<svg class="a" style="left:44px;top:193.48px" width="12" height="12"><rect x="0.6" y="0.6" width="10.8" height="10.8" fill="none" stroke="#777" stroke-width="1.1"/><path d="M1.5 6.8H4.8M6.8 6.8H10.5" stroke="#666" stroke-width="0.9"/><rect x="5.2" y="6" width="1.3" height="1.6" fill="#555"/></svg>
<svg class="a" style="left:59px;top:194.28px" width="10.5" height="10.5"><rect width="10.5" height="10.5" fill="#4cb54f"/><path d="M2.5 5.3L4.5 7.3L8 3.3" fill="none" stroke="#e8f5e8" stroke-width="0.9"/></svg>
<div class="t" style="left:73px;top:196.75px;font-size:8.32px;font-family:&quot;Liberation Mono&quot;,monospace;"><span style="color:#3a93c0">EIS::</span><span style="color:#1e1e1e">ISw_Stat (</span><span style="color:#d5502a">&quot;Read&quot;</span><span style="color:#1e1e1e">, </span><span style="color:#3a93c0">SignalCount</span><span style="color:#1e1e1e">, </span><span style="color:#d5502a">&quot;Unchanged&quot;</span><span style="color:#1e1e1e">, </span><span style="color:#d5502a">&quot;False&quot;</span><span style="color:#1e1e1e">, </span><span style="color:#d5502a">&quot;SNA&quot;</span><span style="color:#1e1e1e">)</span></div>
<div class="t" style="left:653px;top:195.75px;font-size:8.32px;color:#333;font-family:&quot;Liberation Mono&quot;,monospace;">0055</div>
<div class="a" style="left:0;top:205.92px;width:705.5px;height:12.87px;background:#fff;"></div>
<div class="a" style="left:11px;top:205.92px;width:1px;height:12.87px;background-image:linear-gradient(#b0b0b0 50%,transparent 50%);background-size:1px 2px;"></div>
<svg class="a" style="left:26px;top:206.35px" width="12" height="12"><circle cx="6" cy="6" r="4.7" fill="none" stroke="#737373" stroke-width="1.25"/><path d="M3.7 6H8.3" stroke="#3a6cc2" stroke-width="1.7"/><path d="M6 3.7V8.3" stroke="#3a6cc2" stroke-width="1.7"/></svg>
<div class="a" style="left:38.5px;top:212px;width:2.5px;height:1px;background:#a8a8a8;"></div>
<svg class="a" style="left:44px;top:206.35px" width="12" height="12"><rect x="0.6" y="0.6" width="10.8" height="10.8" fill="none" stroke="#777" stroke-width="1.1"/><path d="M1.5 7.5H3.5L5 3.5L6.5 8.5L7.5 6H10.5" fill="none" stroke="#555" stroke-width="0.9"/></svg>
<svg class="a" style="left:59px;top:207.16px" width="10.5" height="10.5"><rect width="10.5" height="10.5" fill="#4cb54f"/><path d="M2.5 5.3L4.5 7.3L8 3.3" fill="none" stroke="#e8f5e8" stroke-width="0.9"/></svg>
<div class="t" style="left:73px;top:209.62px;font-size:8.32px;font-family:&quot;Liberation Mono&quot;,monospace;"><span style="color:#3a93c0">EIS::</span><span style="color:#1e1e1e">EIS_A1 Statistic Data (</span><span style="color:#a94fc4">False</span><span style="color:#1e1e1e">)</span></div>
<div class="t" style="left:653px;top:208.62px;font-size:8.32px;color:#333;font-family:&quot;Liberation Mono&quot;,monospace;">0056</div>
<div class="a" style="left:0;top:218.79px;width:705.5px;height:12.87px;background:#f0f0f0;"></div>
<div class="a" style="left:11px;top:218.79px;width:1px;height:12.87px;background-image:linear-gradient(#b0b0b0 50%,transparent 50%);background-size:1px 2px;"></div>
<svg class="a" style="left:26px;top:219.22px" width="12" height="12"><circle cx="6" cy="6" r="4.7" fill="none" stroke="#737373" stroke-width="1.25"/><path d="M3.7 6H8.3" stroke="#3a6cc2" stroke-width="1.7"/><path d="M6 3.7V8.3" stroke="#3a6cc2" stroke-width="1.7"/></svg>
<div class="a" style="left:38.5px;top:225px;width:2.5px;height:1px;background:#a8a8a8;"></div>
<svg class="a" style="left:44px;top:219.22px" width="13" height="12"><path d="M0.5 3H7M0.5 6H8.5M0.5 9H7" stroke="#777" stroke-width="1"/><path d="M8 4L10 6L8 8" fill="none" stroke="#777" stroke-width="0.9"/><path d="M11.5 2V10" stroke="#777" stroke-width="1"/></svg>
<svg class="a" style="left:59px;top:220.03px" width="10.5" height="10.5"><rect width="10.5" height="10.5" fill="#4cb54f"/><path d="M2.5 5.3L4.5 7.3L8 3.3" fill="none" stroke="#e8f5e8" stroke-width="0.9"/></svg>
<div class="t" style="left:73px;top:222.49px;font-size:8.32px;font-family:&quot;Liberation Mono&quot;,monospace;"><span style="color:#1e1e1e">Identifier Set From TestStep List (</span><span style="color:#3a93c0">StandardDeviation</span><span style="color:#1e1e1e">, </span><span style="color:#d5502a">&quot;ResultList&quot;</span><span style="color:#1e1e1e">, </span><span style="color:#d5502a">&quot;Strict&quot;</span><span style="color:#1e1e1e">)</span></div>
<div class="t" style="left:653px;top:221.49px;font-size:8.32px;color:#333;font-family:&quot;Liberation Mono&quot;,monospace;">0057</div>
<div class="a" style="left:0;top:231.66px;width:705.5px;height:12.87px;background:#fff;"></div>
<div class="a" style="left:11px;top:231.66px;width:1px;height:12.87px;background-image:linear-gradient(#b0b0b0 50%,transparent 50%);background-size:1px 2px;"></div>
<svg class="a" style="left:26px;top:232.09px" width="12" height="12"><circle cx="6" cy="6" r="4.7" fill="none" stroke="#737373" stroke-width="1.25"/><path d="M3.7 6H8.3" stroke="#3a6cc2" stroke-width="1.7"/></svg>
<div class="a" style="left:38.5px;top:238px;width:2.5px;height:1px;background:#a8a8a8;"></div>
<svg class="a" style="left:44px;top:232.09px" width="13" height="13"><circle cx="6" cy="6.5" r="5" fill="#fff" stroke="#777" stroke-width="1.1"/><text x="6" y="9.3" font-size="7.5" text-anchor="middle" fill="#666" font-family="Liberation Sans">?</text></svg>
<div class="t" style="left:73px;top:235.36px;font-size:8.32px;font-family:&quot;Liberation Mono&quot;,monospace;"><span style="color:#3b3bea">If...Else</span></div>
<div class="a" style="left:641px;top:0;width:1px;height:239px;background:#e6e6e6;"></div>
</div>
<div class="a" style="left:987.5px;top:153.4px;width:11.5px;height:239px;background:#e8e8e8;"></div>
<div class="a" style="left:987.5px;top:153.4px;width:11.5px;height:12px;background:#fff;box-sizing:border-box;border:1px solid #c0c0c0;"></div>
<div class="a" style="left:987.5px;top:165.8px;width:11.5px;height:12px;background:#fff;box-sizing:border-box;border:1px solid #c0c0c0;"></div>
<div class="a" style="left:987.5px;top:368.5px;width:11.5px;height:12px;background:#fff;box-sizing:border-box;border:1px solid #c0c0c0;"></div>
<div class="a" style="left:987.5px;top:380.5px;width:11.5px;height:12px;background:#fff;box-sizing:border-box;border:1px solid #c0c0c0;"></div>
<svg class="a" style="left:990px;top:157px;" width="7" height="5" viewBox="0 0 7 5"><path d="M0.5 4L3.5 0.8L6.5 4Z" fill="#606060"/></svg>
<svg class="a" style="left:990px;top:169.5px;" width="7" height="5" viewBox="0 0 7 5"><path d="M0.5 0.8L3.5 4L6.5 0.8Z" fill="#606060"/></svg>
<svg class="a" style="left:990px;top:372px;" width="7" height="5" viewBox="0 0 7 5"><path d="M0.5 4L3.5 0.8L6.5 4Z" fill="#606060"/></svg>
<svg class="a" style="left:990px;top:384px;" width="7" height="5" viewBox="0 0 7 5"><path d="M0.5 0.8L3.5 4L6.5 0.8Z" fill="#606060"/></svg>
<div class="a" style="left:987.5px;top:228.4px;width:11.5px;height:23px;background:#fff;box-sizing:border-box;border:1px solid #c0c0c0;"></div>
<div class="a" style="left:282px;top:392.4px;width:717px;height:1.4px;background:#c8c8c8;"></div>
<div class="a" style="left:282px;top:393.7px;width:717px;height:17.2px;background:#2b579a;"></div>
<svg class="a" style="left:284px;top:396px;" width="4" height="13" viewBox="0 0 4 13"><rect x="1" y="1" width="1.3" height="1.3" fill="#c8d4ea"/><rect x="1" y="4" width="1.3" height="1.3" fill="#c8d4ea"/><rect x="1" y="7" width="1.3" height="1.3" fill="#c8d4ea"/><rect x="1" y="10" width="1.3" height="1.3" fill="#c8d4ea"/></svg>
<div class="t" style="left:290.2px;top:398.91px;font-size:8.14px;color:#fff;transform:scaleX(0.955);transform-origin:left center;">Property Window</div>
<div class="a" style="left:282px;top:432.5px;width:717px;height:1px;background:#e3e3e3;"></div>
<svg class="a" style="left:290px;top:416px;" width="12" height="12" viewBox="0 0 12 12"><rect x="0.6" y="0.6" width="10.8" height="10.8" fill="none" stroke="#777" stroke-width="1.1"/><path d="M1.5 6.8H4.8M6.8 6.8H10.5" stroke="#666" stroke-width="0.9"/><rect x="5.2" y="6" width="1.3" height="1.6" fill="#555"/></svg>
<div class="t" style="left:307.4px;top:416.53px;font-size:9.88px;color:#222;transform:scaleX(0.761);transform-origin:left center;">ISw_Stat</div>
<div class="a" style="left:345px;top:414px;width:1px;height:15px;background:#b8b8b8;"></div>
<div class="t" style="left:352.5px;top:417.83px;font-size:9.30px;color:#222;transform:scaleX(0.850);transform-origin:left center;">Expected Error Level:</div>
<svg class="a" style="left:435.5px;top:417.7px;" width="10" height="10" viewBox="0 0 10 10"><rect x="0.55" y="0.55" width="8.4" height="8.4" fill="#fff" stroke="#555" stroke-width="1.1"/><path d="M2 4.8L4 6.8L7.6 2.6" fill="none" stroke="#333" stroke-width="1"/></svg>
<div class="t" style="left:448.9px;top:417.83px;font-size:9.30px;color:#222;transform:scaleX(0.825);transform-origin:left center;">Information</div>
<svg class="a" style="left:494.8px;top:417.7px;" width="10" height="10" viewBox="0 0 10 10"><rect x="0.55" y="0.55" width="8.4" height="8.4" fill="#fff" stroke="#555" stroke-width="1.1"/></svg>
<div class="t" style="left:507.9px;top:417.83px;font-size:9.30px;color:#222;transform:scaleX(0.846);transform-origin:left center;">Warning</div>
<svg class="a" style="left:542.6px;top:417.7px;" width="10" height="10" viewBox="0 0 10 10"><rect x="0.55" y="0.55" width="8.4" height="8.4" fill="#fff" stroke="#555" stroke-width="1.1"/></svg>
<div class="t" style="left:556.7px;top:417.83px;font-size:9.30px;color:#222;transform:scaleX(0.822);transform-origin:left center;">Error</div>
<div class="a" style="left:580px;top:414px;width:1px;height:15px;background:#b8b8b8;"></div>
<svg class="a" style="left:585px;top:417.7px;" width="10" height="10" viewBox="0 0 10 10"><rect x="0.55" y="0.55" width="8.4" height="8.4" fill="#fff" stroke="#555" stroke-width="1.1"/><path d="M2 4.8L4 6.8L7.6 2.6" fill="none" stroke="#333" stroke-width="1"/></svg>
<div class="t" style="left:599px;top:417.83px;font-size:9.30px;color:#222;transform:scaleX(0.854);transform-origin:left center;">Write Protocol Output</div>
<div class="a" style="left:682.2px;top:414px;width:1px;height:15px;background:#b8b8b8;"></div>
<svg class="a" style="left:690.5px;top:416.5px;" width="10" height="10" viewBox="0 0 10 10"><rect x="0" y="0.9" width="9" height="1.3" fill="#9a9a9a"/><rect x="0" y="3.1" width="9" height="1.3" fill="#9a9a9a"/><path d="M4.5 5.2V8.6M3 6.8H6" stroke="#9a9a9a" stroke-width="1.1"/></svg>
<svg class="a" style="left:709px;top:416.5px;" width="10" height="10" viewBox="0 0 10 10"><rect x="0" y="0.9" width="9" height="1.3" fill="#9a9a9a"/><rect x="0" y="3.1" width="9" height="1.3" fill="#9a9a9a"/><path d="M3.2 5.6L5.8 8.2M5.8 5.6L3.2 8.2" stroke="#9a9a9a" stroke-width="0.9"/></svg>
<svg class="a" style="left:727.5px;top:416.5px;" width="10" height="10" viewBox="0 0 10 10"><rect x="0" y="0.9" width="9" height="1.3" fill="#9a9a9a"/><rect x="0" y="3.1" width="9" height="1.3" fill="#9a9a9a"/><path d="M4.5 5.4V8.8M3 6.9L4.5 5.3L6 6.9" fill="none" stroke="#9a9a9a" stroke-width="1"/></svg>
<svg class="a" style="left:746px;top:416.5px;" width="10" height="10" viewBox="0 0 10 10"><rect x="0" y="0.9" width="9" height="1.3" fill="#9a9a9a"/><rect x="0" y="3.1" width="9" height="1.3" fill="#9a9a9a"/><path d="M4.5 5V8.4M3 6.8L4.5 8.4L6 6.8" fill="none" stroke="#9a9a9a" stroke-width="1"/></svg>
<div class="a" style="left:763px;top:414px;width:1px;height:15px;background:#b8b8b8;"></div>
<svg class="a" style="left:771px;top:416.3px;" width="10" height="10" viewBox="0 0 10 10"><path d="M5 0.5L9.8 9H0.2Z" fill="#e8562a"/><path d="M3 6L4.5 7.5L7 4.5" fill="none" stroke="#fff" stroke-width="0.9"/></svg>
<svg class="a" style="left:789px;top:415.7px;" width="11" height="11" viewBox="0 0 11 11"><path d="M5.5 0.5L10.5 8.5H0.5Z" fill="#e8562a"/><rect x="0.5" y="9.3" width="10" height="1.2" fill="#e8562a"/><path d="M3.5 5.5L5 7L7.5 4" fill="none" stroke="#fff" stroke-width="0.9"/></svg>
<div class="a" style="left:806.5px;top:414px;width:1px;height:15px;background:#b8b8b8;"></div>
<div class="t" style="left:812px;top:417.83px;font-size:9.30px;color:#1e1e1e;transform:scaleX(0.854);transform-origin:left center;">Reads or writes a fixed CAN signal.</div>
<svg class="a" style="left:287px;top:434.5px;" width="12" height="12" viewBox="0 0 12 12"><circle cx="6" cy="6" r="4.7" fill="#fff" stroke="#767676" stroke-width="1.25"/><path d="M3.8 6H8.2" stroke="#3a6cc2" stroke-width="1.5"/></svg>
<div class="a" style="left:298.5px;top:440px;width:5.5px;height:1px;background:transparent;background-image:linear-gradient(90deg,#b4b4b4 60%,transparent 60%);background-size:3px 1px;"></div>
<div class="t" style="left:305.2px;top:436.85px;font-size:8.66px;color:#1e1e1e;">General</div>
<div class="a" style="left:293px;top:446px;width:1px;height:81px;background:transparent;background-image:linear-gradient(#b4b4b4 60%,transparent 60%);background-size:1px 3px;"></div>
<svg class="a" style="left:287px;top:526.5px;" width="12" height="12" viewBox="0 0 12 12"><circle cx="6" cy="6" r="4.7" fill="#fff" stroke="#767676" stroke-width="1.25"/><path d="M3.8 6H8.2" stroke="#3a6cc2" stroke-width="1.5"/></svg>
<div class="a" style="left:298.5px;top:532px;width:5.5px;height:1px;background:transparent;background-image:linear-gradient(90deg,#b4b4b4 60%,transparent 60%);background-size:3px 1px;"></div>
<div class="t" style="left:305.2px;top:528.85px;font-size:8.66px;color:#1e1e1e;">Signal Data</div>
<div class="a" style="left:325.2px;top:450.6px;width:410.40000000000003px;height:15.799999999999955px;background:#ebebeb;"></div>
<div class="t" style="left:329.9px;top:454.88px;font-size:8.60px;color:#222;">Parameter</div>
<div class="a" style="left:437.09999999999997px;top:450.6px;width:1.4px;height:15.799999999999955px;background:#f7f7f7;"></div>
<div class="t" style="left:442.4px;top:454.88px;font-size:8.60px;color:#222;">Context Scope</div>
<div class="a" style="left:503.7px;top:450.6px;width:1.4px;height:15.799999999999955px;background:#f7f7f7;"></div>
<div class="t" style="left:509.0px;top:454.88px;font-size:8.60px;color:#222;">Context Type</div>
<div class="a" style="left:577.1999999999999px;top:450.6px;width:1.4px;height:15.799999999999955px;background:#f7f7f7;"></div>
<div class="t" style="left:582.5px;top:454.88px;font-size:8.60px;color:#222;">Value</div>
<div class="a" style="left:325.2px;top:465.79999999999995px;width:410.40000000000003px;height:0.6px;background:#dcdcdc;"></div>
<div class="a" style="left:325.2px;top:466.4px;width:410.40000000000003px;height:14.800000000000011px;background:#fff;"></div>
<div class="t" style="left:328.2px;top:470.08px;font-size:8.60px;color:#222;">IO-Mode</div>
<div class="a" style="left:324.7px;top:466.4px;width:1px;height:14.800000000000011px;background:#d6d6d6;"></div>
<div class="a" style="left:437.7px;top:466.4px;width:54.60000000000002px;height:14.800000000000011px;background:#80c966;"></div>
<div class="a" style="left:492.3px;top:466.7px;width:12px;height:14.200000000000012px;background:#e6e6e6;box-sizing:border-box;border:1px solid #c6c6c6;"></div>
<svg class="a" style="left:494.8px;top:471.29999999999995px;" width="7" height="5" viewBox="0 0 7 5"><path d="M0.8 1L3.5 3.8L6.2 1" fill="none" stroke="#555" stroke-width="0.9"/></svg>
<div class="t" style="left:440.2px;top:470.89px;font-size:8.50px;color:#1a1a1a;font-family:'Liberation Mono',monospace;-webkit-text-stroke:0.25px #1a1a1a;">Fixed</div>
<div class="a" style="left:437.2px;top:466.4px;width:1px;height:14.800000000000011px;background:#d6d6d6;"></div>
<div class="a" style="left:503.8px;top:466.4px;width:1px;height:14.800000000000011px;background:#d6d6d6;"></div>
<div class="a" style="left:577.8px;top:466.4px;width:145.80000000000007px;height:14.800000000000011px;background:#80c966;"></div>
<div class="a" style="left:723.6px;top:466.7px;width:12px;height:14.200000000000012px;background:#e6e6e6;box-sizing:border-box;border:1px solid #c6c6c6;"></div>
<svg class="a" style="left:726.1px;top:471.29999999999995px;" width="7" height="5" viewBox="0 0 7 5"><path d="M0.8 1L3.5 3.8L6.2 1" fill="none" stroke="#555" stroke-width="0.9"/></svg>
<div class="t" style="left:580.3px;top:470.89px;font-size:8.50px;color:#1a1a1a;font-family:'Liberation Mono',monospace;-webkit-text-stroke:0.25px #1a1a1a;">Write</div>
<div class="a" style="left:577.3px;top:466.4px;width:1px;height:14.800000000000011px;background:#d6d6d6;"></div>
<div class="a" style="left:735.1px;top:466.4px;width:1px;height:14.800000000000011px;background:#d6d6d6;"></div>
<div class="a" style="left:325.2px;top:480.3px;width:410.40000000000003px;height:0.9px;background:#cfcfcf;"></div>
<div class="a" style="left:325.2px;top:481.2px;width:410.40000000000003px;height:13.400000000000034px;background:#fff;"></div>
<div class="t" style="left:328.2px;top:484.18px;font-size:8.60px;color:#222;">Wait Bus Cycles</div>
<div class="a" style="left:324.7px;top:481.2px;width:1px;height:13.400000000000034px;background:#d6d6d6;"></div>
<div class="a" style="left:437.7px;top:481.2px;width:54.60000000000002px;height:13.400000000000034px;background:#80c966;"></div>
<div class="a" style="left:492.3px;top:481.5px;width:12px;height:12.800000000000034px;background:#e6e6e6;box-sizing:border-box;border:1px solid #c6c6c6;"></div>
<svg class="a" style="left:494.8px;top:485.4px;" width="7" height="5" viewBox="0 0 7 5"><path d="M0.8 1L3.5 3.8L6.2 1" fill="none" stroke="#555" stroke-width="0.9"/></svg>
<div class="t" style="left:440.2px;top:484.99px;font-size:8.50px;color:#1a1a1a;font-family:'Liberation Mono',monospace;-webkit-text-stroke:0.25px #1a1a1a;">Local</div>
<div class="a" style="left:437.2px;top:481.2px;width:1px;height:13.400000000000034px;background:#d6d6d6;"></div>
<div class="a" style="left:504.3px;top:481.2px;width:61.49999999999994px;height:13.400000000000034px;background:#80c966;"></div>
<div class="a" style="left:565.8px;top:481.5px;width:12px;height:12.800000000000034px;background:#e6e6e6;box-sizing:border-box;border:1px solid #c6c6c6;"></div>
<svg class="a" style="left:568.3px;top:485.4px;" width="7" height="5" viewBox="0 0 7 5"><path d="M0.8 1L3.5 3.8L6.2 1" fill="none" stroke="#555" stroke-width="0.9"/></svg>
<div class="t" style="left:506.8px;top:484.99px;font-size:8.50px;color:#1a1a1a;font-family:'Liberation Mono',monospace;-webkit-text-stroke:0.25px #1a1a1a;">Variables</div>
<div class="a" style="left:503.8px;top:481.2px;width:1px;height:13.400000000000034px;background:#d6d6d6;"></div>
<div class="a" style="left:577.8px;top:481.2px;width:145.80000000000007px;height:13.400000000000034px;background:#80c966;"></div>
<div class="a" style="left:723.6px;top:481.5px;width:12px;height:12.800000000000034px;background:#e6e6e6;box-sizing:border-box;border:1px solid #c6c6c6;"></div>
<svg class="a" style="left:726.1px;top:485.4px;" width="7" height="5" viewBox="0 0 7 5"><path d="M0.8 1L3.5 3.8L6.2 1" fill="none" stroke="#555" stroke-width="0.9"/></svg>
<div class="t" style="left:580.3px;top:484.99px;font-size:8.50px;color:#1a1a1a;font-family:'Liberation Mono',monospace;-webkit-text-stroke:0.25px #1a1a1a;">WaitCycles</div>
<div class="a" style="left:577.3px;top:481.2px;width:1px;height:13.400000000000034px;background:#d6d6d6;"></div>
<div class="a" style="left:735.1px;top:481.2px;width:1px;height:13.400000000000034px;background:#d6d6d6;"></div>
<div class="a" style="left:325.2px;top:493.70000000000005px;width:410.40000000000003px;height:0.9px;background:#cfcfcf;"></div>
<div class="a" style="left:325.2px;top:494.6px;width:410.40000000000003px;height:13.699999999999989px;background:#fff;"></div>
<div class="t" style="left:328.2px;top:497.73px;font-size:8.60px;color:#222;">Value Comparison Mode</div>
<div class="a" style="left:324.7px;top:494.6px;width:1px;height:13.699999999999989px;background:#d6d6d6;"></div>
<div class="a" style="left:437.7px;top:494.6px;width:54.60000000000002px;height:13.699999999999989px;background:#80c966;"></div>
<div class="a" style="left:492.3px;top:494.90000000000003px;width:12px;height:13.099999999999989px;background:#e6e6e6;box-sizing:border-box;border:1px solid #c6c6c6;"></div>
<svg class="a" style="left:494.8px;top:498.95000000000005px;" width="7" height="5" viewBox="0 0 7 5"><path d="M0.8 1L3.5 3.8L6.2 1" fill="none" stroke="#555" stroke-width="0.9"/></svg>
<div class="t" style="left:440.2px;top:498.54px;font-size:8.50px;color:#1a1a1a;font-family:'Liberation Mono',monospace;-webkit-text-stroke:0.25px #1a1a1a;">Fixed</div>
<div class="a" style="left:437.2px;top:494.6px;width:1px;height:13.699999999999989px;background:#d6d6d6;"></div>
<div class="a" style="left:503.8px;top:494.6px;width:1px;height:13.699999999999989px;background:#d6d6d6;"></div>
<div class="a" style="left:577.8px;top:494.6px;width:145.80000000000007px;height:13.699999999999989px;background:#80c966;"></div>
<div class="a" style="left:723.6px;top:494.90000000000003px;width:12px;height:13.099999999999989px;background:#e6e6e6;box-sizing:border-box;border:1px solid #c6c6c6;"></div>
<svg class="a" style="left:726.1px;top:498.95000000000005px;" width="7" height="5" viewBox="0 0 7 5"><path d="M0.8 1L3.5 3.8L6.2 1" fill="none" stroke="#555" stroke-width="0.9"/></svg>
<div class="t" style="left:580.3px;top:498.54px;font-size:8.50px;color:#1a1a1a;font-family:'Liberation Mono',monospace;-webkit-text-stroke:0.25px #1a1a1a;">Unchanged</div>
<div class="a" style="left:577.3px;top:494.6px;width:1px;height:13.699999999999989px;background:#d6d6d6;"></div>
<div class="a" style="left:735.1px;top:494.6px;width:1px;height:13.699999999999989px;background:#d6d6d6;"></div>
<div class="a" style="left:325.2px;top:507.40000000000003px;width:410.40000000000003px;height:0.9px;background:#cfcfcf;"></div>
<div class="a" style="left:325.2px;top:508.3px;width:410.40000000000003px;height:13.199999999999989px;background:#fff;"></div>
<div class="t" style="left:328.2px;top:511.18px;font-size:8.60px;color:#222;">Wake Up Node</div>
<div class="a" style="left:324.7px;top:508.3px;width:1px;height:13.199999999999989px;background:#d6d6d6;"></div>
<div class="a" style="left:437.7px;top:508.3px;width:54.60000000000002px;height:13.199999999999989px;background:#80c966;"></div>
<div class="a" style="left:492.3px;top:508.6px;width:12px;height:12.599999999999989px;background:#e6e6e6;box-sizing:border-box;border:1px solid #c6c6c6;"></div>
<svg class="a" style="left:494.8px;top:512.4px;" width="7" height="5" viewBox="0 0 7 5"><path d="M0.8 1L3.5 3.8L6.2 1" fill="none" stroke="#555" stroke-width="0.9"/></svg>
<div class="t" style="left:440.2px;top:511.99px;font-size:8.50px;color:#1a1a1a;font-family:'Liberation Mono',monospace;-webkit-text-stroke:0.25px #1a1a1a;">Fixed</div>
<div class="a" style="left:437.2px;top:508.3px;width:1px;height:13.199999999999989px;background:#d6d6d6;"></div>
<div class="a" style="left:503.8px;top:508.3px;width:1px;height:13.199999999999989px;background:#d6d6d6;"></div>
<div class="a" style="left:577.8px;top:508.3px;width:145.80000000000007px;height:13.199999999999989px;background:#80c966;"></div>
<div class="a" style="left:723.6px;top:508.6px;width:12px;height:12.599999999999989px;background:#e6e6e6;box-sizing:border-box;border:1px solid #c6c6c6;"></div>
<svg class="a" style="left:726.1px;top:512.4px;" width="7" height="5" viewBox="0 0 7 5"><path d="M0.8 1L3.5 3.8L6.2 1" fill="none" stroke="#555" stroke-width="0.9"/></svg>
<div class="t" style="left:580.3px;top:511.99px;font-size:8.50px;color:#1a1a1a;font-family:'Liberation Mono',monospace;-webkit-text-stroke:0.25px #1a1a1a;">True</div>
<div class="a" style="left:577.3px;top:508.3px;width:1px;height:13.199999999999989px;background:#d6d6d6;"></div>
<div class="a" style="left:735.1px;top:508.3px;width:1px;height:13.199999999999989px;background:#d6d6d6;"></div>
<div class="a" style="left:325.2px;top:520.6px;width:410.40000000000003px;height:0.9px;background:#cfcfcf;"></div>
<div class="a" style="left:314px;top:446px;width:1px;height:70px;background:transparent;background-image:linear-gradient(#b4b4b4 60%,transparent 60%);background-size:1px 3px;"></div>
<div class="a" style="left:315px;top:474px;width:10px;height:1px;background:transparent;background-image:linear-gradient(90deg,#b4b4b4 60%,transparent 60%);background-size:3px 1px;"></div>
<div class="a" style="left:315px;top:488px;width:10px;height:1px;background:transparent;background-image:linear-gradient(90deg,#b4b4b4 60%,transparent 60%);background-size:3px 1px;"></div>
<div class="a" style="left:315px;top:502px;width:10px;height:1px;background:transparent;background-image:linear-gradient(90deg,#b4b4b4 60%,transparent 60%);background-size:3px 1px;"></div>
<div class="a" style="left:315px;top:515px;width:10px;height:1px;background:transparent;background-image:linear-gradient(90deg,#b4b4b4 60%,transparent 60%);background-size:3px 1px;"></div>
<div class="a" style="left:325.6px;top:542.9px;width:672.4px;height:15.399999999999977px;background:#ebebeb;"></div>
<div class="t" style="left:330.3px;top:546.98px;font-size:8.60px;color:#222;">Parameter</div>
<div class="a" style="left:418.29999999999995px;top:542.9px;width:1.4px;height:15.399999999999977px;background:#f7f7f7;"></div>
<div class="t" style="left:423.59999999999997px;top:546.98px;font-size:8.60px;color:#222;">Name</div>
<div class="a" style="left:470.09999999999997px;top:542.9px;width:1.4px;height:15.399999999999977px;background:#f7f7f7;"></div>
<div class="t" style="left:475.4px;top:546.98px;font-size:8.60px;color:#222;">Description</div>
<div class="a" style="left:563.9px;top:542.9px;width:1.4px;height:15.399999999999977px;background:#f7f7f7;"></div>
<div class="t" style="left:569.2px;top:546.98px;font-size:8.60px;color:#222;">Start-Position</div>
<div class="a" style="left:637.1px;top:542.9px;width:1.4px;height:15.399999999999977px;background:#f7f7f7;"></div>
<div class="t" style="left:642.4000000000001px;top:546.98px;font-size:8.60px;color:#222;">Length</div>
<div class="a" style="left:683.4px;top:542.9px;width:1.4px;height:15.399999999999977px;background:#f7f7f7;"></div>
<div class="t" style="left:688.7px;top:546.98px;font-size:8.60px;color:#222;">Format</div>
<div class="a" style="left:730.9px;top:542.9px;width:1.4px;height:15.399999999999977px;background:#f7f7f7;"></div>
<div class="t" style="left:736.2px;top:546.98px;font-size:8.60px;color:#222;">Hex-Value</div>
<div class="a" style="left:791.4px;top:542.9px;width:1.4px;height:15.399999999999977px;background:#f7f7f7;"></div>
<div class="t" style="left:796.7px;top:546.98px;font-size:8.60px;color:#222;">Context Scope</div>
<div class="a" style="left:858.4px;top:542.9px;width:1.4px;height:15.399999999999977px;background:#f7f7f7;"></div>
<div class="t" style="left:863.7px;top:546.98px;font-size:8.60px;color:#222;">Context Type</div>
<div class="a" style="left:930.4px;top:542.9px;width:1.4px;height:15.399999999999977px;background:#f7f7f7;"></div>
<div class="t" style="left:935.7px;top:546.98px;font-size:8.60px;color:#222;">Value</div>
<div class="a" style="left:325.6px;top:557.6999999999999px;width:672.4px;height:0.6px;background:#dcdcdc;"></div>
<div class="a" style="left:325.6px;top:558.3px;width:672.4px;height:15.0px;background:#fff;"></div>
<div class="t" style="left:328.6px;top:562.08px;font-size:8.60px;color:#222;">Target Signal Value</div>
<div class="a" style="left:325.1px;top:558.3px;width:1px;height:15.0px;background:#d6d6d6;"></div>
<div class="t" style="left:421.9px;top:562.08px;font-size:8.60px;color:#222;">ISw_Stat</div>
<div class="a" style="left:418.4px;top:558.3px;width:1px;height:15.0px;background:#d6d6d6;"></div>
<div class="t" style="left:473.7px;top:562.08px;font-size:8.60px;color:#222;">Ignition switch state</div>
<div class="a" style="left:470.2px;top:558.3px;width:1px;height:15.0px;background:#d6d6d6;"></div>
<div class="t" style="left:567.5px;top:562.08px;font-size:8.60px;color:#222;">0</div>
<div class="a" style="left:564.0px;top:558.3px;width:1px;height:15.0px;background:#d6d6d6;"></div>
<div class="t" style="left:640.7px;top:562.08px;font-size:8.60px;color:#222;">3</div>
<div class="a" style="left:637.2px;top:558.3px;width:1px;height:15.0px;background:#d6d6d6;"></div>
<div class="t" style="left:687px;top:562.08px;font-size:8.60px;color:#222;">Intel</div>
<div class="a" style="left:683.5px;top:558.3px;width:1px;height:15.0px;background:#d6d6d6;"></div>
<div class="t" style="left:734.5px;top:562.08px;font-size:8.60px;color:#222;">0x4</div>
<div class="a" style="left:731.0px;top:558.3px;width:1px;height:15.0px;background:#d6d6d6;"></div>
<div class="a" style="left:792px;top:558.3px;width:55px;height:15.0px;background:#80c966;"></div>
<div class="a" style="left:847px;top:558.5999999999999px;width:12px;height:14.4px;background:#e6e6e6;box-sizing:border-box;border:1px solid #c6c6c6;"></div>
<svg class="a" style="left:849.5px;top:563.3px;" width="7" height="5" viewBox="0 0 7 5"><path d="M0.8 1L3.5 3.8L6.2 1" fill="none" stroke="#555" stroke-width="0.9"/></svg>
<div class="t" style="left:794.5px;top:562.89px;font-size:8.50px;color:#1a1a1a;font-family:'Liberation Mono',monospace;-webkit-text-stroke:0.25px #1a1a1a;">Fixed</div>
<div class="a" style="left:791.5px;top:558.3px;width:1px;height:15.0px;background:#d6d6d6;"></div>
<div class="a" style="left:858.5px;top:558.3px;width:1px;height:15.0px;background:#d6d6d6;"></div>
<div class="a" style="left:931px;top:558.3px;width:55px;height:15.0px;background:#80c966;"></div>
<div class="a" style="left:986px;top:558.5999999999999px;width:12px;height:14.4px;background:#e6e6e6;box-sizing:border-box;border:1px solid #c6c6c6;"></div>
<svg class="a" style="left:988.5px;top:563.3px;" width="7" height="5" viewBox="0 0 7 5"><path d="M0.8 1L3.5 3.8L6.2 1" fill="none" stroke="#555" stroke-width="0.9"/></svg>
<div class="t" style="left:933.5px;top:562.89px;font-size:8.50px;color:#1a1a1a;font-family:'Liberation Mono',monospace;-webkit-text-stroke:0.25px #1a1a1a;">IGN_ON</div>
<div class="a" style="left:930.5px;top:558.3px;width:1px;height:15.0px;background:#d6d6d6;"></div>
<div class="a" style="left:997.5px;top:558.3px;width:1px;height:15.0px;background:#d6d6d6;"></div>
<div class="a" style="left:325.6px;top:572.4px;width:672.4px;height:0.9px;background:#cfcfcf;"></div>
<div class="a" style="left:314px;top:538px;width:1px;height:28px;background:transparent;background-image:linear-gradient(#b4b4b4 60%,transparent 60%);background-size:1px 3px;"></div>
<div class="a" style="left:315px;top:566px;width:10px;height:1px;background:transparent;background-image:linear-gradient(90deg,#b4b4b4 60%,transparent 60%);background-size:3px 1px;"></div>
<div class="a" style="left:282px;top:596.4px;width:717px;height:12px;background:#fff;box-sizing:border-box;border-top:1px solid #c8c8c8;border-bottom:1px solid #c8c8c8;"></div>
<div class="a" style="left:282.5px;top:596.4px;width:11.5px;height:12px;background:#fff;box-sizing:border-box;border:1px solid #c8c8c8;"></div>
<div class="a" style="left:294px;top:596.4px;width:11.5px;height:12px;background:#fff;box-sizing:border-box;border:1px solid #c8c8c8;"></div>
<div class="a" style="left:975px;top:596.4px;width:11.5px;height:12px;background:#fff;box-sizing:border-box;border:1px solid #c8c8c8;"></div>
<div class="a" style="left:987.5px;top:596.4px;width:11.5px;height:12px;background:#fff;box-sizing:border-box;border:1px solid #c8c8c8;"></div>
<svg class="a" style="left:285.5px;top:599px;" width="6" height="7" viewBox="0 0 6 7"><path d="M4.5 0.5L1 3.5L4.5 6.5Z" fill="#666"/></svg>
<svg class="a" style="left:297.5px;top:599px;" width="6" height="7" viewBox="0 0 6 7"><path d="M1 0.5L4.5 3.5L1 6.5Z" fill="#666"/></svg>
<svg class="a" style="left:978px;top:599px;" width="6" height="7" viewBox="0 0 6 7"><path d="M4.5 0.5L1 3.5L4.5 6.5Z" fill="#666"/></svg>
<svg class="a" style="left:990.5px;top:599px;" width="6" height="7" viewBox="0 0 6 7"><path d="M1 0.5L4.5 3.5L1 6.5Z" fill="#666"/></svg>
<div class="a" style="left:339.4px;top:608px;width:1px;height:15px;background:#d0d0d0;"></div>
<div class="a" style="left:407.2px;top:608px;width:1px;height:15px;background:#d0d0d0;"></div>
<div class="t" style="left:288.2px;top:612.46px;font-size:8.43px;color:#2a2a2a;transform:scaleX(0.934);transform-origin:left center;">Error Window</div>
<div class="t" style="left:343.5px;top:612.46px;font-size:8.43px;color:#4b5aa6;transform:scaleX(0.936);transform-origin:left center;">Property Window</div>
<div class="t" style="left:411px;top:612.46px;font-size:8.43px;color:#2a2a2a;transform:scaleX(0.933);transform-origin:left center;">Trace Window</div>
<div class="a" style="left:0px;top:623px;width:1000px;height:20px;background:#2b579a;"></div>
<div class="t" style="left:745px;top:628.70px;font-size:9.16px;color:#fff;transform:scaleX(0.854);transform-origin:left center;">Step wait time:</div>
<div class="t" style="left:802.2px;top:628.70px;font-size:9.16px;color:#fff;transform:scaleX(0.852);transform-origin:left center;">0 ms</div>
<div class="a" style="left:854.5px;top:631.4px;width:4px;height:1.4px;background:#fff;"></div>
<div class="a" style="left:869px;top:631.6px;width:65px;height:1.1px;background:#e8eef8;"></div>
<svg class="a" style="left:862.3px;top:626.5px;" width="8" height="11" viewBox="0 0 8 11"><path d="M0.5 0.5H7.5V7L4 10L0.5 7Z" fill="#c9d4e8" stroke="#fff" stroke-width="0.8"/><rect x="3" y="3" width="2" height="4" fill="#7a8db0"/></svg>
<div class="a" style="left:938.5px;top:631.4px;width:5px;height:1.4px;background:#fff;"></div>
<div class="a" style="left:940.3px;top:629.5px;width:1.4px;height:5px;background:#fff;"></div>
<div class="t" style="left:956px;top:628.70px;font-size:9.16px;color:#fff;transform:scaleX(0.842);transform-origin:left center;">14:02:37</div>
<svg class="a" style="left:989px;top:634px;" width="10" height="9" viewBox="0 0 10 9"><rect x="7" y="1" width="1.2" height="1.2" fill="#8ea6cc"/><rect x="4" y="4" width="1.2" height="1.2" fill="#8ea6cc"/><rect x="7" y="4" width="1.2" height="1.2" fill="#8ea6cc"/><rect x="1" y="7" width="1.2" height="1.2" fill="#8ea6cc"/><rect x="4" y="7" width="1.2" height="1.2" fill="#8ea6cc"/><rect x="7" y="7" width="1.2" height="1.2" fill="#8ea6cc"/></svg>
</body></html>
